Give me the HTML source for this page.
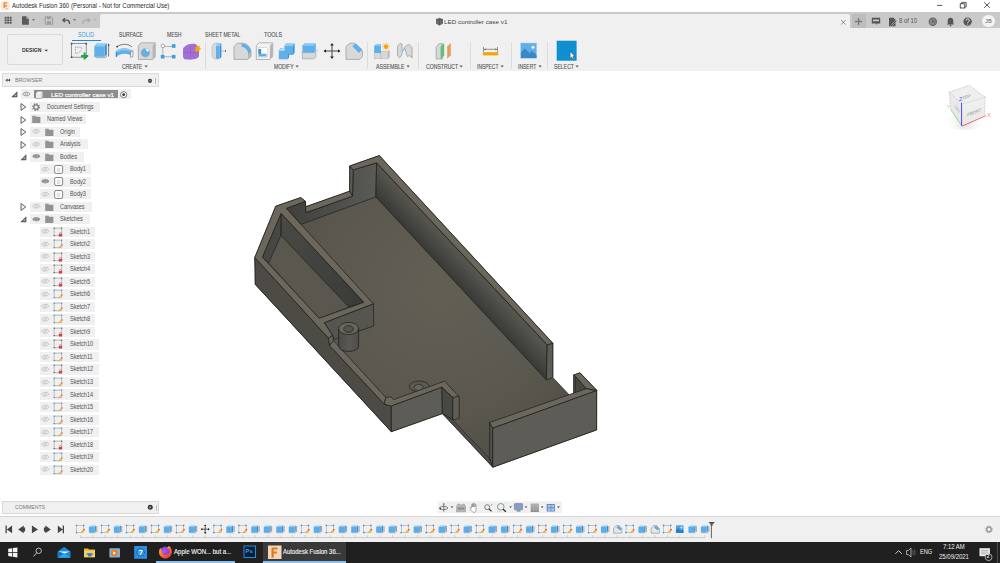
<!DOCTYPE html><html><head><meta charset="utf-8"><style>html,body{margin:0;padding:0;}body{width:1000px;height:563px;overflow:hidden;position:relative;background:#fff;font-family:'Liberation Sans',sans-serif;}div,svg{box-sizing:border-box;}</style></head><body>
<div style="position:absolute;left:0px;top:0px;width:1000px;height:12px;background:#ffffff;"></div>
<svg style="position:absolute;left:0px;top:0px;" width="11" height="12" viewBox="0 0 11 12"><rect x="1" y="1.6" width="8.6" height="8.6" fill="#fde6d2"/><path d="M3.6 2.2h3.6v1.3H4.9v1.6h2v1.3h-2v1.6H3.6z" fill="#e08a36"/><path d="M5.8 8.4h2.2v0.7H5.8z" fill="#f0a060"/></svg>
<div style="position:absolute;left:12.1px;top:2.94px;font-size:6.686px;line-height:1;color:#2a2a2a;font-weight:normal;white-space:nowrap;transform:scaleX(0.9126);transform-origin:0 0;">Autodesk Fusion 360 (Personal - Not for Commercial Use)</div>
<svg style="position:absolute;left:930px;top:0px;" width="70" height="12" viewBox="0 0 70 12"><path d="M7 5.4h5.3" stroke="#222" stroke-width="0.75"/><path d="M31.6 3.6v-1.2h4.6v4.6h-1.2" fill="none" stroke="#222" stroke-width="0.7"/><rect x="30.2" y="3.8" width="4.6" height="4.2" fill="none" stroke="#222" stroke-width="0.75"/><path d="M54.2 2.4l5.6 5.4M59.8 2.4l-5.6 5.4" stroke="#222" stroke-width="0.75"/></svg>
<div style="position:absolute;left:0px;top:12px;width:1000px;height:16px;background:#c9c9c9;"></div>
<div style="position:absolute;left:100px;top:13.5px;width:750px;height:14.5px;background:#f0f0f0;border-radius:2px 2px 0 0;"></div>
<svg style="position:absolute;left:4px;top:16px;" width="10" height="9" viewBox="0 0 10 9"><rect x="0.7" y="0.8" width="1.9" height="1.9" fill="#555"/><rect x="0.7" y="3.3" width="1.9" height="1.9" fill="#555"/><rect x="0.7" y="5.8" width="1.9" height="1.9" fill="#555"/><rect x="3.2" y="0.8" width="1.9" height="1.9" fill="#555"/><rect x="3.2" y="3.3" width="1.9" height="1.9" fill="#555"/><rect x="3.2" y="5.8" width="1.9" height="1.9" fill="#555"/><rect x="5.7" y="0.8" width="1.9" height="1.9" fill="#555"/><rect x="5.7" y="3.3" width="1.9" height="1.9" fill="#555"/><rect x="5.7" y="5.8" width="1.9" height="1.9" fill="#555"/></svg>
<svg style="position:absolute;left:21px;top:16px;" width="16" height="9" viewBox="0 0 16 9"><path d="M1 0.3h4.2l2.6 2.6v5.8H1z" fill="#5a5a5a"/><path d="M5.2 0.3v2.6h2.6" fill="#9a9a9a"/><path d="M11 3.2h3l-1.5 1.6z" fill="#555"/></svg>
<svg style="position:absolute;left:44px;top:16px;" width="10" height="9" viewBox="0 0 10 9"><path d="M1.2 0.8h6.2l1.2 1.2v6.2H1.2z" fill="none" stroke="#999" stroke-width="1"/><rect x="3" y="1" width="3.6" height="2.2" fill="#999"/><rect x="3" y="5.2" width="4" height="2.6" fill="#999"/></svg>
<svg style="position:absolute;left:62px;top:16px;" width="16" height="9" viewBox="0 0 16 9"><path d="M3 2.2L0.8 4.2L3 6.2M1 4.2h3.5c1.8 0 3 1.2 3 3v0.8" fill="none" stroke="#555" stroke-width="1.3"/><path d="M11 3.2h3l-1.5 1.6z" fill="#555"/></svg>
<svg style="position:absolute;left:82px;top:16px;" width="16" height="9" viewBox="0 0 16 9"><path d="M5.5 2.2L7.7 4.2L5.5 6.2M7.5 4.2H4c-1.8 0-3 1.2-3 3v0.8" fill="none" stroke="#aaa" stroke-width="1.3"/><path d="M11.5 3.2h3l-1.5 1.6z" fill="#aaa"/></svg>
<svg style="position:absolute;left:435px;top:16.5px;" width="9" height="9" viewBox="0 0 9 9"><path d="M1 2.2L4.5 0.8L8 2.2v4.6L4.5 8.4L1 6.8z" fill="#6a6a6a"/><path d="M1 2.2L4.5 3.4L8 2.2" fill="none" stroke="#444" stroke-width="0.6"/><path d="M4.5 3.4v5" stroke="#444" stroke-width="0.6"/></svg>
<div style="position:absolute;left:444.4px;top:18.53px;font-size:6.105px;line-height:1;color:#444;font-weight:normal;white-space:nowrap;transform:scaleX(1.0340);transform-origin:0 0;">LED controller case v1</div>
<svg style="position:absolute;left:840px;top:18.5px;" width="7" height="7" viewBox="0 0 7 7"><path d="M1 1l4.6 4.6M5.6 1L1 5.6" stroke="#777" stroke-width="0.8"/></svg>
<div style="position:absolute;left:851.5px;top:14px;width:14px;height:14px;background:#bdbdbd;"></div>
<svg style="position:absolute;left:854px;top:17px;" width="10" height="9" viewBox="0 0 10 9"><path d="M4.6 1v7M1.1 4.5h7" stroke="#777" stroke-width="1.3"/></svg>
<svg style="position:absolute;left:871px;top:16.5px;" width="10" height="9" viewBox="0 0 10 9"><path d="M0.8 0.8h8.4v5.6H6.5l-1.2 1.6v-1.6H0.8z" fill="#555"/><rect x="2" y="2.6" width="6" height="1.6" fill="#ccc"/></svg>
<svg style="position:absolute;left:888px;top:16.5px;" width="10" height="10" viewBox="0 0 10 10"><path d="M1 0.8h4.5l2 2v6.4H1z" fill="#555"/><path d="M3.5 7.5l4.5-4.5 1 1-4.5 4.5z" fill="#555" stroke="#c9c9c9" stroke-width="0.5"/></svg>
<div style="position:absolute;left:898.5px;top:18.19px;font-size:6.395px;line-height:1;color:#555;font-weight:normal;white-space:nowrap;transform:scaleX(0.9306);transform-origin:0 0;">8 of 10</div>
<svg style="position:absolute;left:928px;top:16.5px;" width="10" height="10" viewBox="0 0 10 10"><circle cx="4.8" cy="4.8" r="4.2" fill="#666"/><circle cx="4.8" cy="4.8" r="3" fill="#888"/><path d="M4.8 2.8v2.2h1.8" fill="none" stroke="#444" stroke-width="0.8"/></svg>
<svg style="position:absolute;left:946px;top:16.5px;" width="9" height="10" viewBox="0 0 9 10"><path d="M4.5 0.8c-2 0-2.8 1.6-2.8 3.4v2.2L0.8 7.6h7.4l-0.9-1.2V4.2c0-1.8-0.8-3.4-2.8-3.4z" fill="#555"/><circle cx="4.5" cy="8.4" r="0.9" fill="#555"/></svg>
<svg style="position:absolute;left:963px;top:16.5px;" width="10" height="10" viewBox="0 0 10 10"><circle cx="4.6" cy="4.6" r="4.2" fill="#555"/><path d="M3.1 3.5c0-1 0.7-1.6 1.6-1.6s1.6 0.6 1.6 1.5c0 1-1.5 1.2-1.5 2.3" fill="none" stroke="#fff" stroke-width="0.9"/><circle cx="4.7" cy="7" r="0.55" fill="#fff"/></svg>
<div style="position:absolute;left:982px;top:14.7px;width:12.5px;height:12.5px;border-radius:50%;background:#f3f3f3;"></div>
<div style="position:absolute;left:984.8px;top:18.23px;font-size:6.105px;line-height:1;color:#666;font-weight:normal;white-space:nowrap;transform:scaleX(0.9545);transform-origin:0 0;">JB</div>
<div style="position:absolute;left:0px;top:28px;width:1000px;height:43px;background:#f0f0f0;"></div>
<div style="position:absolute;left:6.5px;top:34.4px;width:56px;height:31px;border:0.8px solid #d9d9d9;border-radius:2px;background:#f0f0f0"></div>
<div style="position:absolute;left:22px;top:47.13px;font-size:6.105px;line-height:1;color:#333;font-weight:bold;white-space:nowrap;transform:scaleX(0.8289);transform-origin:0 0;">DESIGN</div>
<svg style="position:absolute;left:43.5px;top:48.6px;" width="5" height="4" viewBox="0 0 5 4"><path d="M0.5 0.8h3.5L2.25 2.6z" fill="#333"/></svg>
<div style="position:absolute;left:78px;top:31.96px;font-size:6.541px;line-height:1;color:#3b97d6;font-weight:normal;white-space:nowrap;transform:scaleX(0.8253);transform-origin:0 0;">SOLID</div>
<div style="position:absolute;left:72px;top:39.7px;width:28.5px;height:1.5px;background:#1c8ad6;"></div>
<div style="position:absolute;left:118.8px;top:31.96px;font-size:6.541px;line-height:1;color:#555;font-weight:normal;white-space:nowrap;transform:scaleX(0.7768);transform-origin:0 0;-webkit-text-stroke:0.12px #555;">SURFACE</div>
<div style="position:absolute;left:167px;top:31.96px;font-size:6.541px;line-height:1;color:#555;font-weight:normal;white-space:nowrap;transform:scaleX(0.7620);transform-origin:0 0;-webkit-text-stroke:0.12px #555;">MESH</div>
<div style="position:absolute;left:205.2px;top:31.96px;font-size:6.541px;line-height:1;color:#555;font-weight:normal;white-space:nowrap;transform:scaleX(0.7874);transform-origin:0 0;-webkit-text-stroke:0.12px #555;">SHEET METAL</div>
<div style="position:absolute;left:264.2px;top:31.96px;font-size:6.541px;line-height:1;color:#555;font-weight:normal;white-space:nowrap;transform:scaleX(0.8162);transform-origin:0 0;-webkit-text-stroke:0.12px #555;">TOOLS</div>
<div style="position:absolute;left:122.2px;top:63.76px;font-size:6.541px;line-height:1;color:#555;font-weight:normal;white-space:nowrap;transform:scaleX(0.7794);transform-origin:0 0;-webkit-text-stroke:0.12px #555;">CREATE</div>
<svg style="position:absolute;left:144.2px;top:64.9px;" width="5" height="4" viewBox="0 0 5 4"><path d="M0.5 0.6h3.2L2.1 2.4z" fill="#555"/></svg>
<div style="position:absolute;left:273.5px;top:63.76px;font-size:6.541px;line-height:1;color:#555;font-weight:normal;white-space:nowrap;transform:scaleX(0.7667);transform-origin:0 0;-webkit-text-stroke:0.12px #555;">MODIFY</div>
<svg style="position:absolute;left:295.2px;top:64.9px;" width="5" height="4" viewBox="0 0 5 4"><path d="M0.5 0.6h3.2L2.1 2.4z" fill="#555"/></svg>
<div style="position:absolute;left:376px;top:63.76px;font-size:6.541px;line-height:1;color:#555;font-weight:normal;white-space:nowrap;transform:scaleX(0.8082);transform-origin:0 0;-webkit-text-stroke:0.12px #555;">ASSEMBLE</div>
<svg style="position:absolute;left:405.8px;top:64.9px;" width="5" height="4" viewBox="0 0 5 4"><path d="M0.5 0.6h3.2L2.1 2.4z" fill="#555"/></svg>
<div style="position:absolute;left:425.5px;top:63.76px;font-size:6.541px;line-height:1;color:#555;font-weight:normal;white-space:nowrap;transform:scaleX(0.7842);transform-origin:0 0;-webkit-text-stroke:0.12px #555;">CONSTRUCT</div>
<svg style="position:absolute;left:458.8px;top:64.9px;" width="5" height="4" viewBox="0 0 5 4"><path d="M0.5 0.6h3.2L2.1 2.4z" fill="#555"/></svg>
<div style="position:absolute;left:477.2px;top:63.76px;font-size:6.541px;line-height:1;color:#555;font-weight:normal;white-space:nowrap;transform:scaleX(0.7584);transform-origin:0 0;-webkit-text-stroke:0.12px #555;">INSPECT</div>
<svg style="position:absolute;left:499.8px;top:64.9px;" width="5" height="4" viewBox="0 0 5 4"><path d="M0.5 0.6h3.2L2.1 2.4z" fill="#555"/></svg>
<div style="position:absolute;left:518.2px;top:63.76px;font-size:6.541px;line-height:1;color:#555;font-weight:normal;white-space:nowrap;transform:scaleX(0.7667);transform-origin:0 0;-webkit-text-stroke:0.12px #555;">INSERT</div>
<svg style="position:absolute;left:537.6px;top:64.9px;" width="5" height="4" viewBox="0 0 5 4"><path d="M0.5 0.6h3.2L2.1 2.4z" fill="#555"/></svg>
<div style="position:absolute;left:554px;top:63.76px;font-size:6.541px;line-height:1;color:#555;font-weight:normal;white-space:nowrap;transform:scaleX(0.7860);transform-origin:0 0;-webkit-text-stroke:0.12px #555;">SELECT</div>
<svg style="position:absolute;left:574.7px;top:64.9px;" width="5" height="4" viewBox="0 0 5 4"><path d="M0.5 0.6h3.2L2.1 2.4z" fill="#555"/></svg>
<div style="position:absolute;left:205.3px;top:42px;width:0.8px;height:26.5px;background:#dcdcdc;"></div>
<div style="position:absolute;left:367.4px;top:42px;width:0.8px;height:26.5px;background:#dcdcdc;"></div>
<div style="position:absolute;left:418.3px;top:42px;width:0.8px;height:26.5px;background:#dcdcdc;"></div>
<div style="position:absolute;left:469.5px;top:42px;width:0.8px;height:26.5px;background:#dcdcdc;"></div>
<div style="position:absolute;left:511px;top:42px;width:0.8px;height:26.5px;background:#dcdcdc;"></div>
<div style="position:absolute;left:546.7px;top:42px;width:0.8px;height:26.5px;background:#dcdcdc;"></div>
<svg style="position:absolute;left:0;top:28px" width="1000" height="43" viewBox="0 28 1000 43"><rect x="71.6" y="43.6" width="14.6" height="13.6" fill="none" stroke="#6a6a6a" stroke-width="0.7"/><rect x="70.8" y="42.800000000000004" width="1.6" height="1.6" fill="#444"/><rect x="85.4" y="42.800000000000004" width="1.6" height="1.6" fill="#444"/><rect x="70.8" y="56.400000000000006" width="1.6" height="1.6" fill="#444"/><rect x="85.4" y="56.400000000000006" width="1.6" height="1.6" fill="#444"/><path d="M75.5 47.2v6.3M75.5 47.2h6.4M75.5 53.5c3.5 0 6.4-2.6 6.4-6.3" fill="none" stroke="#777" stroke-width="0.6" stroke-dasharray="1 0.6"/><path d="M84.6 52.4v7.2M81 56h7.2" stroke="#22a64a" stroke-width="2"/><path d="M94.3 56.5l2 1.8h9l2-2v-1.5l-2 2h-9l-2-1.8z" fill="#b5b5b5"/><path d="M94.3 46.2l2.2-3h10.3l-2.2 3z" fill="#8ccbf5"/><path d="M104.6 46.2l2.2-3v11.2l-2.2 2.4z" fill="#3f8fd0"/><rect x="94.3" y="46.2" width="10.3" height="10.6" fill="#5fb0ea"/><path d="M108.6 44v12.6" stroke="#333" stroke-width="0.6"/><path d="M107.6 45.4l1-1.8 1 1.8z" fill="#333"/><path d="M116.8 46.8c4.5-3.2 11.2-3.4 15.2 0.2" fill="none" stroke="#444" stroke-width="0.7"/><circle cx="117.2" cy="46.6" r="0.9" fill="#333"/><path d="M115.8 51c5.2-3.6 12-3.6 17 0v5.2c-5-3.4-11.8-3.4-17 0.8z" fill="#5fb0ea"/><path d="M115.8 51c5.2-3.6 12-3.6 17 0l-1.6 1.2c-4.6-2.6-10.4-2.6-14.2 0.4z" fill="#8ccbf5"/><path d="M130.6 51.6l2.4-0.8v5.6l-2.4 1z" fill="#f4f4f4" stroke="#555" stroke-width="0.5"/><path d="M115.8 52.2v4.6c0.6 0.4 1 0.3 1.4 0v-4.8z" fill="#3f8fd0"/><path d="M138.3 46l2.6-3.2h14.3v13.7l-2.6 3H138.3z" fill="#d8d8d8" stroke="#8c8c8c" stroke-width="0.6"/><path d="M152.6 45.9l2.6-3.1v13.7l-2.6 3z" fill="#b5b5b5"/><circle cx="145.4" cy="52.8" r="4.3" fill="#5fb0ea" stroke="#aaa" stroke-width="0.6"/><path d="M145.4 48.5a4.3 4.3 0 0 1 3.6 2.2l-1.8 1z" fill="#fff"/><path d="M162.8 46.4h10M162.8 46.4v10.3h10" stroke="#888" stroke-width="0.6" fill="none"/><circle cx="162.8" cy="45.8" r="1.8" fill="#fff" stroke="#777" stroke-width="0.6"/><rect x="171.9" y="44.2" width="3.6" height="3.6" fill="#3d9be0"/><rect x="160.8" y="54.9" width="3.6" height="3.6" fill="#3d9be0"/><rect x="171.9" y="54.9" width="3.6" height="3.6" fill="#3d9be0"/><path d="M185.5 46c2-2 7-2.5 10-2l3.5 3.5v9c-1 2-4 3-8 3h-5c-2 0-3-1.5-3-3.5v-6.5c0-1.5 1-2.5 2.5-3.5z" fill="#a070d8"/><path d="M183.5 52.5h15M190.5 46v13.5" stroke="#8658c0" stroke-width="0.5"/><path d="M195.7 47.6l1.2-3.2 1.1 2 2.2-0.8-0.8 2.2 2 1.1-2.3 0.9 0.6 2.2-2-1-1.2 2-0.5-2.2-2.2 0.2 1.4-1.6z" fill="#f6a20c"/><path d="M212 46l2.5-3h3.5v16h-3.5l-2.5-2.5z" fill="#d8d8d8" stroke="#b5b5b5" stroke-width="0.6"/><path d="M215.8 46.2l1.6-3.2h4l-1.6 3.2z" fill="#8ccbf5"/><path d="M219.8 46.2l1.6-3.2v13.5l-1.6 2.6z" fill="#3f8fd0"/><rect x="216" y="46.2" width="3.8" height="12.6" fill="#5fb0ea"/><path d="M222 51h3.2" stroke="#777" stroke-width="0.5"/><path d="M225 50.1l1.2 0.9-1.2 0.9z" fill="#333"/><path d="M234 46.4l3.2-3.2h5c4.6 0 8.8 3.6 8.8 8.6v4.6l-3 3H234z" fill="#d8d8d8" stroke="#8c8c8c" stroke-width="0.6"/><path d="M248 53.4l3-2.4v5.4l-3 3z" fill="#b5b5b5"/><path d="M241.6 43.4c4.8 0 9.2 3.6 9.4 8.8l-2.8 1.6c-0.4-3.8-3.2-6.8-6.6-7z" fill="#5fb0ea"/><path d="M256.3 45.8l2.8-3h13.6v13.5l-2.8 3.2H256.3z" fill="#f2f2f2" stroke="#8c8c8c" stroke-width="0.6"/><path d="M269.9 45.8l2.8-3v13.5l-2.8 3.2z" fill="#b5b5b5"/><rect x="258.2" y="47.8" width="9.5" height="9.2" fill="#fff" stroke="#b5b5b5" stroke-width="0.4"/><path d="M258.6 49h2.5v4.8h5.4v2.8h-7.9z" fill="#5fb0ea"/><path d="M258.6 49h2.5v4.8h-2.5z" fill="#3f8fd0"/><path d="M284.4 45.6l1.6-2.4h8.6l-1.6 2.4z" fill="#8ccbf5"/><path d="M293 45.6l1.6-2.4v9.4L293 55z" fill="#3f8fd0"/><rect x="284.4" y="45.6" width="8.6" height="9.4" fill="#5fb0ea"/><path d="M278.8 50.5l1.6-2.4h4.6v0z" fill="#8ccbf5"/><rect x="278.8" y="50.5" width="8.6" height="8.8" fill="#5fb0ea"/><path d="M287.4 55l1.6-1.6v4.4l-1.6 1.6z" fill="#3f8fd0"/><path d="M302.4 54l2-1.8h11.4v5l-2 1.6H302.4z" fill="#d8d8d8" stroke="#8c8c8c" stroke-width="0.5"/><path d="M302.4 45.8l2-2.4h11.4v7.2l-2 1.5H302.4z" fill="#5fb0ea"/><path d="M302.4 45.8l2-2.4h11.4l-2 2.4z" fill="#8ccbf5"/><path d="M301.2 52.6h12.4l4-2.4" fill="none" stroke="#57aee8" stroke-width="0.7"/><path d="M332 44v14M324.6 51h14.8" stroke="#333" stroke-width="0.9"/><path d="M332 43l-1.8 2.4h3.6zM332 59l-1.8-2.4h3.6zM323.6 51l2.4-1.8v3.6zM340.4 51l-2.4-1.8v3.6z" fill="#222"/><path d="M346 46.6l4-3.4h4.6l7.8 7.4v6.2l-2.6 2.6H346z" fill="#d8d8d8" stroke="#8c8c8c" stroke-width="0.6"/><path d="M352.4 46.2l3-3 6.8 6.4-3.2 3.4z" fill="#5fb0ea"/><rect x="374.2" y="51.4" width="6.8" height="7.4" fill="#d8d8d8" stroke="#b5b5b5" stroke-width="0.5"/><rect x="381" y="51.4" width="7" height="7.4" fill="#d8d8d8" stroke="#b5b5b5" stroke-width="0.5"/><path d="M388 51.4l1.6-1.6v7.4L388 58.8z" fill="#b5b5b5"/><path d="M374.2 45.5l1.6-1.6h5.8l-0.6 1.6z" fill="#8ccbf5"/><rect x="374.2" y="45.5" width="6.8" height="7.5" fill="#5fb0ea"/><circle cx="386" cy="46.6" r="2.2" fill="#f6a20c"/><path d="M386 42.6v8M382 46.6h8M383.2 43.8l5.6 5.6M388.8 43.8l-5.6 5.6" stroke="#f6a20c" stroke-width="0.6"/><path d="M397.5 46.5l2.4-3.2 2.2 1v9.6l-2.4 4-2.2-2z" fill="#d8d8d8" stroke="#8c8c8c" stroke-width="0.6"/><path d="M404.5 47.6l2.4-2.2 2.2-0.8 3 2.8v10.6l-2.6-2.4-2.2 1z" fill="#d8d8d8" stroke="#8c8c8c" stroke-width="0.6"/><path d="M402.5 51.5l2.2-3.6" stroke="#5fb0ea" stroke-width="1"/><path d="M436.2 47l3-3.4h3.2v15.4h-6.2z" fill="#d8d8d8" stroke="#8c8c8c" stroke-width="0.6"/><path d="M440.6 46.4l3.6-3.2v12.6l-3.6 3.2z" fill="#5cc27a"/><path d="M447.2 46.4l3.6-3.4v12.4l-3.6 3.2z" fill="#e89a63"/><path d="M483.5 47v5M497.5 47v5M484 49.3h13" stroke="#555" stroke-width="0.6"/><path d="M484.2 49.3l1.4-0.8v1.6zM496.8 49.3l-1.4-0.8v1.6z" fill="#333"/><rect x="483" y="52.2" width="15.2" height="3.2" fill="#f4a40a"/><rect x="520.7" y="43" width="16" height="15.3" fill="#5fb0ea" stroke="#a5d4f4" stroke-width="0.5"/><path d="M520.9 58.1v-5.4l3.8-4.4 4.6 4.6 2.6-2.2 4.6 4.4v3z" fill="#3a88c6"/><circle cx="533" cy="47.3" r="1.5" fill="#fff7c4"/><rect x="556.7" y="40.7" width="19.9" height="20" fill="#0e8fd4"/><rect x="559.2" y="43.4" width="14.4" height="13.5" fill="none" stroke="#2fb06a" stroke-width="0.5" stroke-dasharray="1 0.8"/><path d="M570.2 51.4v7l1.5-1.4 1.2 2.6 1-0.5-1.2-2.5h2z" fill="#fff" stroke="#333" stroke-width="0.4"/></svg>
<div style="position:absolute;left:2px;top:73.3px;width:157px;height:13.4px;background:#f0f0f0;border:0.7px solid #dadada;"></div>
<svg style="position:absolute;left:4.5px;top:77.5px;" width="6" height="5" viewBox="0 0 6 5"><path d="M0.3 2.2L2.6 0.6v3.2zM2.8 2.2L5.1 0.6v3.2z" fill="#444"/></svg>
<div style="position:absolute;left:15px;top:76.61px;font-size:6.250px;line-height:1;color:#777;font-weight:normal;white-space:nowrap;transform:scaleX(0.8423);transform-origin:0 0;">BROWSER</div>
<svg style="position:absolute;left:146.5px;top:78px;" width="6" height="6" viewBox="0 0 6 6"><circle cx="3" cy="2.8" r="2.1" fill="#333"/><path d="M1.6 2.8h2.8" stroke="#fff" stroke-width="0.5"/></svg>
<div style="position:absolute;left:155.2px;top:77.5px;width:1px;height:6px;background:#bbb;"></div>
<div style="position:absolute;left:20.9px;top:89.0px;width:110.0px;height:10.2px;background:#f0f0f0;"></div>
<svg style="position:absolute;left:10.6px;top:90.9px;" width="7" height="7" viewBox="0 0 7 7"><path d="M0.2 6.3L6.4 0.3V6.3z" fill="#505050"/><path d="M2.6 5.3L5.4 2.6v2.7z" fill="#a8a8a8"/></svg>
<svg style="position:absolute;left:22.2px;top:91.0px;" width="9" height="7" viewBox="0 0 9 7"><path d="M0.5 3C2.1 0.6 6.5 0.6 8.1 3C6.5 5.4 2.1 5.4 0.5 3z" fill="none" stroke="#8f8f8f" stroke-width="0.9"/><circle cx="4.3" cy="3" r="1.3" fill="none" stroke="#a0a0a0" stroke-width="0.6"/><circle cx="4.3" cy="3" r="0.4" fill="#777"/></svg>
<div style="position:absolute;left:34px;top:90.1px;width:84px;height:8.4px;background:#8d8d8d;"></div>
<svg style="position:absolute;left:35.2px;top:90.6px;" width="9" height="8.5" viewBox="0 0 9 8.5"><path d="M0.6 2.2l1.8-1.8h5.4v5.6l-1.8 1.9H0.6z" fill="#7b7b7b"/><path d="M1 2.4l1.6-1.6h4.8v5.2l-1.6 1.6H1z" fill="#e9ebf0"/><path d="M1 2.4l1.6-1.6h4.8l-1.6 1.6z" fill="#fbfbfd"/><path d="M5.8 2.4l1.6-1.6v5.2l-1.6 1.6z" fill="#d3d6de"/></svg>
<div style="position:absolute;left:51px;top:91.91px;font-size:6.250px;line-height:1;color:#ffffff;font-weight:normal;white-space:nowrap;transform:scaleX(1.0020);transform-origin:0 0;-webkit-text-stroke:0.2px #fff;">LED controller case v1</div>
<svg style="position:absolute;left:119.8px;top:90.8px;" width="8" height="8" viewBox="0 0 8 8"><circle cx="3.7" cy="3.7" r="3.1" fill="#fff" stroke="#444" stroke-width="0.7"/><circle cx="3.7" cy="3.7" r="1.4" fill="#333"/></svg>
<div style="position:absolute;left:30px;top:101.52px;width:69.9px;height:10.2px;background:#f0f0f0;"></div>
<svg style="position:absolute;left:20.3px;top:103.02px;" width="8" height="8" viewBox="0 0 8 8"><path d="M1 0.6L5.8 4L1 7.4z" fill="#f4f4f4" stroke="#606060" stroke-width="1" stroke-linejoin="round"/></svg>
<svg style="position:absolute;left:31.8px;top:102.52px;" width="9" height="9" viewBox="0 0 9 9"><circle cx="4.05" cy="4.05" r="3.3" fill="none" stroke="#8a8a8a" stroke-width="1.5" stroke-dasharray="1.3 1.29"/><circle cx="4.05" cy="4.05" r="2.3" fill="none" stroke="#8a8a8a" stroke-width="1.6"/></svg>
<div style="position:absolute;left:47.3px;top:103.56px;font-size:6.686px;line-height:1;color:#525252;font-weight:normal;white-space:nowrap;transform:scaleX(0.8249);transform-origin:0 0;">Document Settings</div>
<div style="position:absolute;left:30px;top:114.03999999999999px;width:56px;height:10.2px;background:#f0f0f0;"></div>
<svg style="position:absolute;left:20.3px;top:115.53999999999999px;" width="8" height="8" viewBox="0 0 8 8"><path d="M1 0.6L5.8 4L1 7.4z" fill="#f4f4f4" stroke="#606060" stroke-width="1" stroke-linejoin="round"/></svg>
<svg style="position:absolute;left:32px;top:115.13999999999999px;" width="9" height="8" viewBox="0 0 9 8"><path d="M0.2 0.8h3.2l0.8 0.9h4.2v6.2H0.2z" fill="#939393"/><path d="M0.2 1.9h3.2l0.8-0.5" stroke="#aaa" stroke-width="0.4" fill="none"/></svg>
<div style="position:absolute;left:47.3px;top:116.08px;font-size:6.686px;line-height:1;color:#525252;font-weight:normal;white-space:nowrap;transform:scaleX(0.8632);transform-origin:0 0;">Named Views</div>
<div style="position:absolute;left:30px;top:126.56px;width:49.599999999999994px;height:10.2px;background:#f0f0f0;"></div>
<svg style="position:absolute;left:20.3px;top:128.06px;" width="8" height="8" viewBox="0 0 8 8"><path d="M1 0.6L5.8 4L1 7.4z" fill="#f4f4f4" stroke="#606060" stroke-width="1" stroke-linejoin="round"/></svg>
<svg style="position:absolute;left:31.8px;top:128.16px;" width="9" height="7" viewBox="0 0 9 7"><path d="M0.6 3.2C2.2 0.8 6.4 0.8 8 3.2C6.4 5.6 2.2 5.6 0.6 3.2z" fill="none" stroke="#c2c2c2" stroke-width="0.9"/><circle cx="4.3" cy="3.2" r="1.1" fill="none" stroke="#c2c2c2" stroke-width="0.6"/><path d="M2.2 5.9L6.4 0.5" stroke="#c2c2c2" stroke-width="0.5"/></svg>
<svg style="position:absolute;left:45px;top:127.66px;" width="9" height="8" viewBox="0 0 9 8"><path d="M0.2 0.8h3.2l0.8 0.9h4.2v6.2H0.2z" fill="#939393"/><path d="M0.2 1.9h3.2l0.8-0.5" stroke="#aaa" stroke-width="0.4" fill="none"/></svg>
<div style="position:absolute;left:60.4px;top:128.60px;font-size:6.686px;line-height:1;color:#525252;font-weight:normal;white-space:nowrap;transform:scaleX(0.8300);transform-origin:0 0;">Origin</div>
<div style="position:absolute;left:30px;top:139.08px;width:58.2px;height:10.2px;background:#f0f0f0;"></div>
<svg style="position:absolute;left:20.3px;top:140.58px;" width="8" height="8" viewBox="0 0 8 8"><path d="M1 0.6L5.8 4L1 7.4z" fill="#f4f4f4" stroke="#606060" stroke-width="1" stroke-linejoin="round"/></svg>
<svg style="position:absolute;left:31.8px;top:140.68px;" width="9" height="7" viewBox="0 0 9 7"><path d="M0.6 3.2C2.2 0.8 6.4 0.8 8 3.2C6.4 5.6 2.2 5.6 0.6 3.2z" fill="none" stroke="#c2c2c2" stroke-width="0.9"/><circle cx="4.3" cy="3.2" r="1.1" fill="none" stroke="#c2c2c2" stroke-width="0.6"/><path d="M2.2 5.9L6.4 0.5" stroke="#c2c2c2" stroke-width="0.5"/></svg>
<svg style="position:absolute;left:45px;top:140.18px;" width="9" height="8" viewBox="0 0 9 8"><path d="M0.2 0.8h3.2l0.8 0.9h4.2v6.2H0.2z" fill="#939393"/><path d="M0.2 1.9h3.2l0.8-0.5" stroke="#aaa" stroke-width="0.4" fill="none"/></svg>
<div style="position:absolute;left:60.4px;top:141.12px;font-size:6.686px;line-height:1;color:#525252;font-weight:normal;white-space:nowrap;transform:scaleX(0.8300);transform-origin:0 0;">Analysis</div>
<div style="position:absolute;left:30px;top:151.6px;width:54px;height:10.2px;background:#f0f0f0;"></div>
<svg style="position:absolute;left:19.8px;top:153.5px;" width="7" height="7" viewBox="0 0 7 7"><path d="M0.4 6.2L6.4 0.3V6.2z" fill="#505050"/><path d="M2.6 5.2L5.4 2.5v2.7z" fill="#a8a8a8"/></svg>
<svg style="position:absolute;left:31.8px;top:153.2px;" width="9" height="7" viewBox="0 0 9 7"><path d="M0.3 3.2C2 0.4 6.6 0.4 8.3 3.2C6.6 6 2 6 0.3 3.2z" fill="#8c8c8c"/><circle cx="4.3" cy="3.2" r="1.6" fill="none" stroke="#b4b4b4" stroke-width="0.7"/></svg>
<svg style="position:absolute;left:45px;top:152.7px;" width="9" height="8" viewBox="0 0 9 8"><path d="M0.2 0.8h3.2l0.8 0.9h4.2v6.2H0.2z" fill="#939393"/><path d="M0.2 1.9h3.2l0.8-0.5" stroke="#aaa" stroke-width="0.4" fill="none"/></svg>
<div style="position:absolute;left:60.4px;top:153.64px;font-size:6.686px;line-height:1;color:#525252;font-weight:normal;white-space:nowrap;transform:scaleX(0.8300);transform-origin:0 0;">Bodies</div>
<div style="position:absolute;left:30px;top:201.67999999999998px;width:62px;height:10.2px;background:#f0f0f0;"></div>
<svg style="position:absolute;left:20.3px;top:203.17999999999998px;" width="8" height="8" viewBox="0 0 8 8"><path d="M1 0.6L5.8 4L1 7.4z" fill="#f4f4f4" stroke="#606060" stroke-width="1" stroke-linejoin="round"/></svg>
<svg style="position:absolute;left:31.8px;top:203.27999999999997px;" width="9" height="7" viewBox="0 0 9 7"><path d="M0.6 3.2C2.2 0.8 6.4 0.8 8 3.2C6.4 5.6 2.2 5.6 0.6 3.2z" fill="none" stroke="#c2c2c2" stroke-width="0.9"/><circle cx="4.3" cy="3.2" r="1.1" fill="none" stroke="#c2c2c2" stroke-width="0.6"/><path d="M2.2 5.9L6.4 0.5" stroke="#c2c2c2" stroke-width="0.5"/></svg>
<svg style="position:absolute;left:45px;top:202.77999999999997px;" width="9" height="8" viewBox="0 0 9 8"><path d="M0.2 0.8h3.2l0.8 0.9h4.2v6.2H0.2z" fill="#939393"/><path d="M0.2 1.9h3.2l0.8-0.5" stroke="#aaa" stroke-width="0.4" fill="none"/></svg>
<div style="position:absolute;left:60.4px;top:203.72px;font-size:6.686px;line-height:1;color:#525252;font-weight:normal;white-space:nowrap;transform:scaleX(0.8300);transform-origin:0 0;">Canvases</div>
<div style="position:absolute;left:30px;top:214.2px;width:60px;height:10.2px;background:#f0f0f0;"></div>
<svg style="position:absolute;left:19.8px;top:216.1px;" width="7" height="7" viewBox="0 0 7 7"><path d="M0.4 6.2L6.4 0.3V6.2z" fill="#505050"/><path d="M2.6 5.2L5.4 2.5v2.7z" fill="#a8a8a8"/></svg>
<svg style="position:absolute;left:31.8px;top:215.79999999999998px;" width="9" height="7" viewBox="0 0 9 7"><path d="M0.3 3.2C2 0.4 6.6 0.4 8.3 3.2C6.6 6 2 6 0.3 3.2z" fill="#8c8c8c"/><circle cx="4.3" cy="3.2" r="1.6" fill="none" stroke="#b4b4b4" stroke-width="0.7"/></svg>
<svg style="position:absolute;left:45px;top:215.29999999999998px;" width="9" height="8" viewBox="0 0 9 8"><path d="M0.2 0.8h3.2l0.8 0.9h4.2v6.2H0.2z" fill="#939393"/><path d="M0.2 1.9h3.2l0.8-0.5" stroke="#aaa" stroke-width="0.4" fill="none"/></svg>
<div style="position:absolute;left:60.4px;top:216.24px;font-size:6.686px;line-height:1;color:#525252;font-weight:normal;white-space:nowrap;transform:scaleX(0.8300);transform-origin:0 0;">Sketches</div>
<div style="position:absolute;left:39.5px;top:164.12px;width:51.5px;height:10.2px;background:#f0f0f0;"></div>
<svg style="position:absolute;left:41px;top:165.72px;" width="9" height="7" viewBox="0 0 9 7"><path d="M0.6 3.2C2.2 0.8 6.4 0.8 8 3.2C6.4 5.6 2.2 5.6 0.6 3.2z" fill="none" stroke="#c2c2c2" stroke-width="0.9"/><circle cx="4.3" cy="3.2" r="1.1" fill="none" stroke="#c2c2c2" stroke-width="0.6"/><path d="M2.2 5.9L6.4 0.5" stroke="#c2c2c2" stroke-width="0.5"/></svg>
<svg style="position:absolute;left:53.8px;top:164.92px;" width="10" height="9" viewBox="0 0 10 9"><rect x="0.6" y="0.5" width="8" height="8" rx="1.6" fill="#fff" stroke="#6a6a6a" stroke-width="0.8"/><rect x="2.8" y="2.8" width="3.6" height="4.4" fill="#e2e2e2"/></svg>
<div style="position:absolute;left:69.6px;top:166.16px;font-size:6.686px;line-height:1;color:#525252;font-weight:normal;white-space:nowrap;transform:scaleX(0.8439);transform-origin:0 0;">Body1</div>
<div style="position:absolute;left:39.5px;top:176.64000000000001px;width:51.5px;height:10.2px;background:#f0f0f0;"></div>
<svg style="position:absolute;left:41px;top:178.24px;" width="9" height="7" viewBox="0 0 9 7"><path d="M0.3 3.2C2 0.4 6.6 0.4 8.3 3.2C6.6 6 2 6 0.3 3.2z" fill="#8c8c8c"/><circle cx="4.3" cy="3.2" r="1.6" fill="none" stroke="#b4b4b4" stroke-width="0.7"/></svg>
<svg style="position:absolute;left:53.8px;top:177.44px;" width="10" height="9" viewBox="0 0 10 9"><rect x="0.6" y="0.5" width="8" height="8" rx="1.6" fill="#fff" stroke="#6a6a6a" stroke-width="0.8"/><rect x="2.8" y="2.8" width="3.6" height="4.4" fill="#e2e2e2"/></svg>
<div style="position:absolute;left:69.6px;top:178.68px;font-size:6.686px;line-height:1;color:#525252;font-weight:normal;white-space:nowrap;transform:scaleX(0.8439);transform-origin:0 0;">Body2</div>
<div style="position:absolute;left:39.5px;top:189.16px;width:51.5px;height:10.2px;background:#f0f0f0;"></div>
<svg style="position:absolute;left:41px;top:190.76px;" width="9" height="7" viewBox="0 0 9 7"><path d="M0.6 3.2C2.2 0.8 6.4 0.8 8 3.2C6.4 5.6 2.2 5.6 0.6 3.2z" fill="none" stroke="#c2c2c2" stroke-width="0.9"/><circle cx="4.3" cy="3.2" r="1.1" fill="none" stroke="#c2c2c2" stroke-width="0.6"/><path d="M2.2 5.9L6.4 0.5" stroke="#c2c2c2" stroke-width="0.5"/></svg>
<svg style="position:absolute;left:53.8px;top:189.95999999999998px;" width="10" height="9" viewBox="0 0 10 9"><rect x="0.6" y="0.5" width="8" height="8" rx="1.6" fill="#fff" stroke="#6a6a6a" stroke-width="0.8"/><rect x="2.8" y="2.8" width="3.6" height="4.4" fill="#e2e2e2"/></svg>
<div style="position:absolute;left:69.6px;top:191.20px;font-size:6.686px;line-height:1;color:#525252;font-weight:normal;white-space:nowrap;transform:scaleX(0.8439);transform-origin:0 0;">Body3</div>
<div style="position:absolute;left:39.5px;top:226.72px;width:55.7px;height:10.2px;background:#f0f0f0;"></div>
<svg style="position:absolute;left:41px;top:228.32px;" width="9" height="7" viewBox="0 0 9 7"><path d="M0.6 3.2C2.2 0.8 6.4 0.8 8 3.2C6.4 5.6 2.2 5.6 0.6 3.2z" fill="none" stroke="#c2c2c2" stroke-width="0.9"/><circle cx="4.3" cy="3.2" r="1.1" fill="none" stroke="#c2c2c2" stroke-width="0.6"/><path d="M2.2 5.9L6.4 0.5" stroke="#c2c2c2" stroke-width="0.5"/></svg>
<svg style="position:absolute;left:53.4px;top:226.72px;" width="10" height="10" viewBox="0 0 10 10"><path d="M1.2 1.2h7.4v7.4H1.2z" fill="none" stroke="#9a9a9a" stroke-width="0.6"/><rect x="0.6" y="0.6" width="1.2" height="1.2" fill="#555"/><rect x="8.0" y="0.6" width="1.2" height="1.2" fill="#555"/><rect x="0.6" y="8.0" width="1.2" height="1.2" fill="#555"/><path d="M6.5 7.2v-0.7a1 1 0 0 1 2 0v0.7" fill="none" stroke="#d03a3a" stroke-width="0.55"/><rect x="5.9" y="7" width="3.2" height="2.6" rx="0.4" fill="#d8393a"/></svg>
<div style="position:absolute;left:69.6px;top:228.76px;font-size:6.686px;line-height:1;color:#525252;font-weight:normal;white-space:nowrap;transform:scaleX(0.8300);transform-origin:0 0;">Sketch1</div>
<div style="position:absolute;left:39.5px;top:239.24px;width:55.7px;height:10.2px;background:#f0f0f0;"></div>
<svg style="position:absolute;left:41px;top:240.84px;" width="9" height="7" viewBox="0 0 9 7"><path d="M0.6 3.2C2.2 0.8 6.4 0.8 8 3.2C6.4 5.6 2.2 5.6 0.6 3.2z" fill="none" stroke="#c2c2c2" stroke-width="0.9"/><circle cx="4.3" cy="3.2" r="1.1" fill="none" stroke="#c2c2c2" stroke-width="0.6"/><path d="M2.2 5.9L6.4 0.5" stroke="#c2c2c2" stroke-width="0.5"/></svg>
<svg style="position:absolute;left:53.4px;top:239.24px;" width="10" height="10" viewBox="0 0 10 10"><path d="M1.2 1.2h7.4v7.4H1.2z" fill="none" stroke="#9a9a9a" stroke-width="0.6"/><rect x="0.6" y="0.6" width="1.2" height="1.2" fill="#2d8fe0"/><rect x="8.0" y="0.6" width="1.2" height="1.2" fill="#2d8fe0"/><rect x="0.6" y="8.0" width="1.2" height="1.2" fill="#2d8fe0"/><path d="M5.4 9.4l0.3-1.2 2.8-2.8 0.9 0.9-2.8 2.8z" fill="#f3b21a"/><circle cx="9" cy="5.9" r="0.7" fill="#e5484d"/></svg>
<div style="position:absolute;left:69.6px;top:241.28px;font-size:6.686px;line-height:1;color:#525252;font-weight:normal;white-space:nowrap;transform:scaleX(0.8300);transform-origin:0 0;">Sketch2</div>
<div style="position:absolute;left:39.5px;top:251.76000000000002px;width:55.7px;height:10.2px;background:#f0f0f0;"></div>
<svg style="position:absolute;left:41px;top:253.36px;" width="9" height="7" viewBox="0 0 9 7"><path d="M0.6 3.2C2.2 0.8 6.4 0.8 8 3.2C6.4 5.6 2.2 5.6 0.6 3.2z" fill="none" stroke="#c2c2c2" stroke-width="0.9"/><circle cx="4.3" cy="3.2" r="1.1" fill="none" stroke="#c2c2c2" stroke-width="0.6"/><path d="M2.2 5.9L6.4 0.5" stroke="#c2c2c2" stroke-width="0.5"/></svg>
<svg style="position:absolute;left:53.4px;top:251.76000000000002px;" width="10" height="10" viewBox="0 0 10 10"><path d="M1.2 1.2h7.4v7.4H1.2z" fill="none" stroke="#9a9a9a" stroke-width="0.6"/><rect x="0.6" y="0.6" width="1.2" height="1.2" fill="#555"/><rect x="8.0" y="0.6" width="1.2" height="1.2" fill="#555"/><rect x="0.6" y="8.0" width="1.2" height="1.2" fill="#555"/><path d="M6.5 7.2v-0.7a1 1 0 0 1 2 0v0.7" fill="none" stroke="#d03a3a" stroke-width="0.55"/><rect x="5.9" y="7" width="3.2" height="2.6" rx="0.4" fill="#d8393a"/></svg>
<div style="position:absolute;left:69.6px;top:253.80px;font-size:6.686px;line-height:1;color:#525252;font-weight:normal;white-space:nowrap;transform:scaleX(0.8300);transform-origin:0 0;">Sketch3</div>
<div style="position:absolute;left:39.5px;top:264.28px;width:55.7px;height:10.2px;background:#f0f0f0;"></div>
<svg style="position:absolute;left:41px;top:265.88px;" width="9" height="7" viewBox="0 0 9 7"><path d="M0.6 3.2C2.2 0.8 6.4 0.8 8 3.2C6.4 5.6 2.2 5.6 0.6 3.2z" fill="none" stroke="#c2c2c2" stroke-width="0.9"/><circle cx="4.3" cy="3.2" r="1.1" fill="none" stroke="#c2c2c2" stroke-width="0.6"/><path d="M2.2 5.9L6.4 0.5" stroke="#c2c2c2" stroke-width="0.5"/></svg>
<svg style="position:absolute;left:53.4px;top:264.28px;" width="10" height="10" viewBox="0 0 10 10"><path d="M1.2 1.2h7.4v7.4H1.2z" fill="none" stroke="#9a9a9a" stroke-width="0.6"/><rect x="0.6" y="0.6" width="1.2" height="1.2" fill="#555"/><rect x="8.0" y="0.6" width="1.2" height="1.2" fill="#555"/><rect x="0.6" y="8.0" width="1.2" height="1.2" fill="#555"/><path d="M6.5 7.2v-0.7a1 1 0 0 1 2 0v0.7" fill="none" stroke="#d03a3a" stroke-width="0.55"/><rect x="5.9" y="7" width="3.2" height="2.6" rx="0.4" fill="#d8393a"/></svg>
<div style="position:absolute;left:69.6px;top:266.32px;font-size:6.686px;line-height:1;color:#525252;font-weight:normal;white-space:nowrap;transform:scaleX(0.8300);transform-origin:0 0;">Sketch4</div>
<div style="position:absolute;left:39.5px;top:276.79999999999995px;width:55.7px;height:10.2px;background:#f0f0f0;"></div>
<svg style="position:absolute;left:41px;top:278.4px;" width="9" height="7" viewBox="0 0 9 7"><path d="M0.6 3.2C2.2 0.8 6.4 0.8 8 3.2C6.4 5.6 2.2 5.6 0.6 3.2z" fill="none" stroke="#c2c2c2" stroke-width="0.9"/><circle cx="4.3" cy="3.2" r="1.1" fill="none" stroke="#c2c2c2" stroke-width="0.6"/><path d="M2.2 5.9L6.4 0.5" stroke="#c2c2c2" stroke-width="0.5"/></svg>
<svg style="position:absolute;left:53.4px;top:276.79999999999995px;" width="10" height="10" viewBox="0 0 10 10"><path d="M1.2 1.2h7.4v7.4H1.2z" fill="none" stroke="#9a9a9a" stroke-width="0.6"/><rect x="0.6" y="0.6" width="1.2" height="1.2" fill="#555"/><rect x="8.0" y="0.6" width="1.2" height="1.2" fill="#555"/><rect x="0.6" y="8.0" width="1.2" height="1.2" fill="#555"/><path d="M6.5 7.2v-0.7a1 1 0 0 1 2 0v0.7" fill="none" stroke="#d03a3a" stroke-width="0.55"/><rect x="5.9" y="7" width="3.2" height="2.6" rx="0.4" fill="#d8393a"/></svg>
<div style="position:absolute;left:69.6px;top:278.84px;font-size:6.686px;line-height:1;color:#525252;font-weight:normal;white-space:nowrap;transform:scaleX(0.8300);transform-origin:0 0;">Sketch5</div>
<div style="position:absolute;left:39.5px;top:289.31999999999994px;width:55.7px;height:10.2px;background:#f0f0f0;"></div>
<svg style="position:absolute;left:41px;top:290.91999999999996px;" width="9" height="7" viewBox="0 0 9 7"><path d="M0.6 3.2C2.2 0.8 6.4 0.8 8 3.2C6.4 5.6 2.2 5.6 0.6 3.2z" fill="none" stroke="#c2c2c2" stroke-width="0.9"/><circle cx="4.3" cy="3.2" r="1.1" fill="none" stroke="#c2c2c2" stroke-width="0.6"/><path d="M2.2 5.9L6.4 0.5" stroke="#c2c2c2" stroke-width="0.5"/></svg>
<svg style="position:absolute;left:53.4px;top:289.31999999999994px;" width="10" height="10" viewBox="0 0 10 10"><path d="M1.2 1.2h7.4v7.4H1.2z" fill="none" stroke="#9a9a9a" stroke-width="0.6"/><rect x="0.6" y="0.6" width="1.2" height="1.2" fill="#2d8fe0"/><rect x="8.0" y="0.6" width="1.2" height="1.2" fill="#2d8fe0"/><rect x="0.6" y="8.0" width="1.2" height="1.2" fill="#2d8fe0"/><path d="M5.4 9.4l0.3-1.2 2.8-2.8 0.9 0.9-2.8 2.8z" fill="#f3b21a"/><circle cx="9" cy="5.9" r="0.7" fill="#e5484d"/></svg>
<div style="position:absolute;left:69.6px;top:291.36px;font-size:6.686px;line-height:1;color:#525252;font-weight:normal;white-space:nowrap;transform:scaleX(0.8300);transform-origin:0 0;">Sketch6</div>
<div style="position:absolute;left:39.5px;top:301.84px;width:55.7px;height:10.2px;background:#f0f0f0;"></div>
<svg style="position:absolute;left:41px;top:303.44px;" width="9" height="7" viewBox="0 0 9 7"><path d="M0.6 3.2C2.2 0.8 6.4 0.8 8 3.2C6.4 5.6 2.2 5.6 0.6 3.2z" fill="none" stroke="#c2c2c2" stroke-width="0.9"/><circle cx="4.3" cy="3.2" r="1.1" fill="none" stroke="#c2c2c2" stroke-width="0.6"/><path d="M2.2 5.9L6.4 0.5" stroke="#c2c2c2" stroke-width="0.5"/></svg>
<svg style="position:absolute;left:53.4px;top:301.84px;" width="10" height="10" viewBox="0 0 10 10"><path d="M1.2 1.2h7.4v7.4H1.2z" fill="none" stroke="#9a9a9a" stroke-width="0.6"/><rect x="0.6" y="0.6" width="1.2" height="1.2" fill="#2d8fe0"/><rect x="8.0" y="0.6" width="1.2" height="1.2" fill="#2d8fe0"/><rect x="0.6" y="8.0" width="1.2" height="1.2" fill="#2d8fe0"/><path d="M5.4 9.4l0.3-1.2 2.8-2.8 0.9 0.9-2.8 2.8z" fill="#f3b21a"/><circle cx="9" cy="5.9" r="0.7" fill="#e5484d"/></svg>
<div style="position:absolute;left:69.6px;top:303.88px;font-size:6.686px;line-height:1;color:#525252;font-weight:normal;white-space:nowrap;transform:scaleX(0.8300);transform-origin:0 0;">Sketch7</div>
<div style="position:absolute;left:39.5px;top:314.35999999999996px;width:55.7px;height:10.2px;background:#f0f0f0;"></div>
<svg style="position:absolute;left:41px;top:315.96px;" width="9" height="7" viewBox="0 0 9 7"><path d="M0.6 3.2C2.2 0.8 6.4 0.8 8 3.2C6.4 5.6 2.2 5.6 0.6 3.2z" fill="none" stroke="#c2c2c2" stroke-width="0.9"/><circle cx="4.3" cy="3.2" r="1.1" fill="none" stroke="#c2c2c2" stroke-width="0.6"/><path d="M2.2 5.9L6.4 0.5" stroke="#c2c2c2" stroke-width="0.5"/></svg>
<svg style="position:absolute;left:53.4px;top:314.35999999999996px;" width="10" height="10" viewBox="0 0 10 10"><path d="M1.2 1.2h7.4v7.4H1.2z" fill="none" stroke="#9a9a9a" stroke-width="0.6"/><rect x="0.6" y="0.6" width="1.2" height="1.2" fill="#2d8fe0"/><rect x="8.0" y="0.6" width="1.2" height="1.2" fill="#2d8fe0"/><rect x="0.6" y="8.0" width="1.2" height="1.2" fill="#2d8fe0"/><path d="M5.4 9.4l0.3-1.2 2.8-2.8 0.9 0.9-2.8 2.8z" fill="#f3b21a"/><circle cx="9" cy="5.9" r="0.7" fill="#e5484d"/></svg>
<div style="position:absolute;left:69.6px;top:316.40px;font-size:6.686px;line-height:1;color:#525252;font-weight:normal;white-space:nowrap;transform:scaleX(0.8300);transform-origin:0 0;">Sketch8</div>
<div style="position:absolute;left:39.5px;top:326.88px;width:55.7px;height:10.2px;background:#f0f0f0;"></div>
<svg style="position:absolute;left:41px;top:328.48px;" width="9" height="7" viewBox="0 0 9 7"><path d="M0.6 3.2C2.2 0.8 6.4 0.8 8 3.2C6.4 5.6 2.2 5.6 0.6 3.2z" fill="none" stroke="#c2c2c2" stroke-width="0.9"/><circle cx="4.3" cy="3.2" r="1.1" fill="none" stroke="#c2c2c2" stroke-width="0.6"/><path d="M2.2 5.9L6.4 0.5" stroke="#c2c2c2" stroke-width="0.5"/></svg>
<svg style="position:absolute;left:53.4px;top:326.88px;" width="10" height="10" viewBox="0 0 10 10"><path d="M1.2 1.2h7.4v7.4H1.2z" fill="none" stroke="#9a9a9a" stroke-width="0.6"/><rect x="0.6" y="0.6" width="1.2" height="1.2" fill="#555"/><rect x="8.0" y="0.6" width="1.2" height="1.2" fill="#555"/><rect x="0.6" y="8.0" width="1.2" height="1.2" fill="#555"/><path d="M6.5 7.2v-0.7a1 1 0 0 1 2 0v0.7" fill="none" stroke="#d03a3a" stroke-width="0.55"/><rect x="5.9" y="7" width="3.2" height="2.6" rx="0.4" fill="#d8393a"/></svg>
<div style="position:absolute;left:69.6px;top:328.92px;font-size:6.686px;line-height:1;color:#525252;font-weight:normal;white-space:nowrap;transform:scaleX(0.8300);transform-origin:0 0;">Sketch9</div>
<div style="position:absolute;left:39.5px;top:339.4px;width:59.900000000000006px;height:10.2px;background:#f0f0f0;"></div>
<svg style="position:absolute;left:41px;top:341.0px;" width="9" height="7" viewBox="0 0 9 7"><path d="M0.6 3.2C2.2 0.8 6.4 0.8 8 3.2C6.4 5.6 2.2 5.6 0.6 3.2z" fill="none" stroke="#c2c2c2" stroke-width="0.9"/><circle cx="4.3" cy="3.2" r="1.1" fill="none" stroke="#c2c2c2" stroke-width="0.6"/><path d="M2.2 5.9L6.4 0.5" stroke="#c2c2c2" stroke-width="0.5"/></svg>
<svg style="position:absolute;left:53.4px;top:339.4px;" width="10" height="10" viewBox="0 0 10 10"><path d="M1.2 1.2h7.4v7.4H1.2z" fill="none" stroke="#9a9a9a" stroke-width="0.6"/><rect x="0.6" y="0.6" width="1.2" height="1.2" fill="#555"/><rect x="8.0" y="0.6" width="1.2" height="1.2" fill="#555"/><rect x="0.6" y="8.0" width="1.2" height="1.2" fill="#555"/><path d="M6.5 7.2v-0.7a1 1 0 0 1 2 0v0.7" fill="none" stroke="#d03a3a" stroke-width="0.55"/><rect x="5.9" y="7" width="3.2" height="2.6" rx="0.4" fill="#d8393a"/></svg>
<div style="position:absolute;left:69.6px;top:341.44px;font-size:6.686px;line-height:1;color:#525252;font-weight:normal;white-space:nowrap;transform:scaleX(0.8300);transform-origin:0 0;">Sketch10</div>
<div style="position:absolute;left:39.5px;top:351.91999999999996px;width:59.900000000000006px;height:10.2px;background:#f0f0f0;"></div>
<svg style="position:absolute;left:41px;top:353.52px;" width="9" height="7" viewBox="0 0 9 7"><path d="M0.6 3.2C2.2 0.8 6.4 0.8 8 3.2C6.4 5.6 2.2 5.6 0.6 3.2z" fill="none" stroke="#c2c2c2" stroke-width="0.9"/><circle cx="4.3" cy="3.2" r="1.1" fill="none" stroke="#c2c2c2" stroke-width="0.6"/><path d="M2.2 5.9L6.4 0.5" stroke="#c2c2c2" stroke-width="0.5"/></svg>
<svg style="position:absolute;left:53.4px;top:351.91999999999996px;" width="10" height="10" viewBox="0 0 10 10"><path d="M1.2 1.2h7.4v7.4H1.2z" fill="none" stroke="#9a9a9a" stroke-width="0.6"/><rect x="0.6" y="0.6" width="1.2" height="1.2" fill="#2d8fe0"/><rect x="8.0" y="0.6" width="1.2" height="1.2" fill="#2d8fe0"/><rect x="0.6" y="8.0" width="1.2" height="1.2" fill="#2d8fe0"/><path d="M5.4 9.4l0.3-1.2 2.8-2.8 0.9 0.9-2.8 2.8z" fill="#f3b21a"/><circle cx="9" cy="5.9" r="0.7" fill="#e5484d"/></svg>
<div style="position:absolute;left:69.6px;top:353.96px;font-size:6.686px;line-height:1;color:#525252;font-weight:normal;white-space:nowrap;transform:scaleX(0.8300);transform-origin:0 0;">Sketch11</div>
<div style="position:absolute;left:39.5px;top:364.43999999999994px;width:59.900000000000006px;height:10.2px;background:#f0f0f0;"></div>
<svg style="position:absolute;left:41px;top:366.03999999999996px;" width="9" height="7" viewBox="0 0 9 7"><path d="M0.6 3.2C2.2 0.8 6.4 0.8 8 3.2C6.4 5.6 2.2 5.6 0.6 3.2z" fill="none" stroke="#c2c2c2" stroke-width="0.9"/><circle cx="4.3" cy="3.2" r="1.1" fill="none" stroke="#c2c2c2" stroke-width="0.6"/><path d="M2.2 5.9L6.4 0.5" stroke="#c2c2c2" stroke-width="0.5"/></svg>
<svg style="position:absolute;left:53.4px;top:364.43999999999994px;" width="10" height="10" viewBox="0 0 10 10"><path d="M1.2 1.2h7.4v7.4H1.2z" fill="none" stroke="#9a9a9a" stroke-width="0.6"/><rect x="0.6" y="0.6" width="1.2" height="1.2" fill="#555"/><rect x="8.0" y="0.6" width="1.2" height="1.2" fill="#555"/><rect x="0.6" y="8.0" width="1.2" height="1.2" fill="#555"/><path d="M6.5 7.2v-0.7a1 1 0 0 1 2 0v0.7" fill="none" stroke="#d03a3a" stroke-width="0.55"/><rect x="5.9" y="7" width="3.2" height="2.6" rx="0.4" fill="#d8393a"/></svg>
<div style="position:absolute;left:69.6px;top:366.48px;font-size:6.686px;line-height:1;color:#525252;font-weight:normal;white-space:nowrap;transform:scaleX(0.8300);transform-origin:0 0;">Sketch12</div>
<div style="position:absolute;left:39.5px;top:376.9599999999999px;width:59.900000000000006px;height:10.2px;background:#f0f0f0;"></div>
<svg style="position:absolute;left:41px;top:378.55999999999995px;" width="9" height="7" viewBox="0 0 9 7"><path d="M0.6 3.2C2.2 0.8 6.4 0.8 8 3.2C6.4 5.6 2.2 5.6 0.6 3.2z" fill="none" stroke="#c2c2c2" stroke-width="0.9"/><circle cx="4.3" cy="3.2" r="1.1" fill="none" stroke="#c2c2c2" stroke-width="0.6"/><path d="M2.2 5.9L6.4 0.5" stroke="#c2c2c2" stroke-width="0.5"/></svg>
<svg style="position:absolute;left:53.4px;top:376.9599999999999px;" width="10" height="10" viewBox="0 0 10 10"><path d="M1.2 1.2h7.4v7.4H1.2z" fill="none" stroke="#9a9a9a" stroke-width="0.6"/><rect x="0.6" y="0.6" width="1.2" height="1.2" fill="#2d8fe0"/><rect x="8.0" y="0.6" width="1.2" height="1.2" fill="#2d8fe0"/><rect x="0.6" y="8.0" width="1.2" height="1.2" fill="#2d8fe0"/><path d="M5.4 9.4l0.3-1.2 2.8-2.8 0.9 0.9-2.8 2.8z" fill="#f3b21a"/><circle cx="9" cy="5.9" r="0.7" fill="#e5484d"/></svg>
<div style="position:absolute;left:69.6px;top:379.00px;font-size:6.686px;line-height:1;color:#525252;font-weight:normal;white-space:nowrap;transform:scaleX(0.8300);transform-origin:0 0;">Sketch13</div>
<div style="position:absolute;left:39.5px;top:389.48px;width:59.900000000000006px;height:10.2px;background:#f0f0f0;"></div>
<svg style="position:absolute;left:41px;top:391.08000000000004px;" width="9" height="7" viewBox="0 0 9 7"><path d="M0.6 3.2C2.2 0.8 6.4 0.8 8 3.2C6.4 5.6 2.2 5.6 0.6 3.2z" fill="none" stroke="#c2c2c2" stroke-width="0.9"/><circle cx="4.3" cy="3.2" r="1.1" fill="none" stroke="#c2c2c2" stroke-width="0.6"/><path d="M2.2 5.9L6.4 0.5" stroke="#c2c2c2" stroke-width="0.5"/></svg>
<svg style="position:absolute;left:53.4px;top:389.48px;" width="10" height="10" viewBox="0 0 10 10"><path d="M1.2 1.2h7.4v7.4H1.2z" fill="none" stroke="#9a9a9a" stroke-width="0.6"/><rect x="0.6" y="0.6" width="1.2" height="1.2" fill="#2d8fe0"/><rect x="8.0" y="0.6" width="1.2" height="1.2" fill="#2d8fe0"/><rect x="0.6" y="8.0" width="1.2" height="1.2" fill="#2d8fe0"/><path d="M5.4 9.4l0.3-1.2 2.8-2.8 0.9 0.9-2.8 2.8z" fill="#f3b21a"/><circle cx="9" cy="5.9" r="0.7" fill="#e5484d"/></svg>
<div style="position:absolute;left:69.6px;top:391.52px;font-size:6.686px;line-height:1;color:#525252;font-weight:normal;white-space:nowrap;transform:scaleX(0.8300);transform-origin:0 0;">Sketch14</div>
<div style="position:absolute;left:39.5px;top:402.0px;width:59.900000000000006px;height:10.2px;background:#f0f0f0;"></div>
<svg style="position:absolute;left:41px;top:403.6px;" width="9" height="7" viewBox="0 0 9 7"><path d="M0.6 3.2C2.2 0.8 6.4 0.8 8 3.2C6.4 5.6 2.2 5.6 0.6 3.2z" fill="none" stroke="#c2c2c2" stroke-width="0.9"/><circle cx="4.3" cy="3.2" r="1.1" fill="none" stroke="#c2c2c2" stroke-width="0.6"/><path d="M2.2 5.9L6.4 0.5" stroke="#c2c2c2" stroke-width="0.5"/></svg>
<svg style="position:absolute;left:53.4px;top:402.0px;" width="10" height="10" viewBox="0 0 10 10"><path d="M1.2 1.2h7.4v7.4H1.2z" fill="none" stroke="#9a9a9a" stroke-width="0.6"/><rect x="0.6" y="0.6" width="1.2" height="1.2" fill="#2d8fe0"/><rect x="8.0" y="0.6" width="1.2" height="1.2" fill="#2d8fe0"/><rect x="0.6" y="8.0" width="1.2" height="1.2" fill="#2d8fe0"/><path d="M5.4 9.4l0.3-1.2 2.8-2.8 0.9 0.9-2.8 2.8z" fill="#f3b21a"/><circle cx="9" cy="5.9" r="0.7" fill="#e5484d"/></svg>
<div style="position:absolute;left:69.6px;top:404.04px;font-size:6.686px;line-height:1;color:#525252;font-weight:normal;white-space:nowrap;transform:scaleX(0.8300);transform-origin:0 0;">Sketch15</div>
<div style="position:absolute;left:39.5px;top:414.52px;width:59.900000000000006px;height:10.2px;background:#f0f0f0;"></div>
<svg style="position:absolute;left:41px;top:416.12px;" width="9" height="7" viewBox="0 0 9 7"><path d="M0.6 3.2C2.2 0.8 6.4 0.8 8 3.2C6.4 5.6 2.2 5.6 0.6 3.2z" fill="none" stroke="#c2c2c2" stroke-width="0.9"/><circle cx="4.3" cy="3.2" r="1.1" fill="none" stroke="#c2c2c2" stroke-width="0.6"/><path d="M2.2 5.9L6.4 0.5" stroke="#c2c2c2" stroke-width="0.5"/></svg>
<svg style="position:absolute;left:53.4px;top:414.52px;" width="10" height="10" viewBox="0 0 10 10"><path d="M1.2 1.2h7.4v7.4H1.2z" fill="none" stroke="#9a9a9a" stroke-width="0.6"/><rect x="0.6" y="0.6" width="1.2" height="1.2" fill="#2d8fe0"/><rect x="8.0" y="0.6" width="1.2" height="1.2" fill="#2d8fe0"/><rect x="0.6" y="8.0" width="1.2" height="1.2" fill="#2d8fe0"/><path d="M5.4 9.4l0.3-1.2 2.8-2.8 0.9 0.9-2.8 2.8z" fill="#f3b21a"/><circle cx="9" cy="5.9" r="0.7" fill="#e5484d"/></svg>
<div style="position:absolute;left:69.6px;top:416.56px;font-size:6.686px;line-height:1;color:#525252;font-weight:normal;white-space:nowrap;transform:scaleX(0.8300);transform-origin:0 0;">Sketch16</div>
<div style="position:absolute;left:39.5px;top:427.03999999999996px;width:59.900000000000006px;height:10.2px;background:#f0f0f0;"></div>
<svg style="position:absolute;left:41px;top:428.64px;" width="9" height="7" viewBox="0 0 9 7"><path d="M0.6 3.2C2.2 0.8 6.4 0.8 8 3.2C6.4 5.6 2.2 5.6 0.6 3.2z" fill="none" stroke="#c2c2c2" stroke-width="0.9"/><circle cx="4.3" cy="3.2" r="1.1" fill="none" stroke="#c2c2c2" stroke-width="0.6"/><path d="M2.2 5.9L6.4 0.5" stroke="#c2c2c2" stroke-width="0.5"/></svg>
<svg style="position:absolute;left:53.4px;top:427.03999999999996px;" width="10" height="10" viewBox="0 0 10 10"><path d="M1.2 1.2h7.4v7.4H1.2z" fill="none" stroke="#9a9a9a" stroke-width="0.6"/><rect x="0.6" y="0.6" width="1.2" height="1.2" fill="#2d8fe0"/><rect x="8.0" y="0.6" width="1.2" height="1.2" fill="#2d8fe0"/><rect x="0.6" y="8.0" width="1.2" height="1.2" fill="#2d8fe0"/><path d="M5.4 9.4l0.3-1.2 2.8-2.8 0.9 0.9-2.8 2.8z" fill="#f3b21a"/><circle cx="9" cy="5.9" r="0.7" fill="#e5484d"/></svg>
<div style="position:absolute;left:69.6px;top:429.08px;font-size:6.686px;line-height:1;color:#525252;font-weight:normal;white-space:nowrap;transform:scaleX(0.8300);transform-origin:0 0;">Sketch17</div>
<div style="position:absolute;left:39.5px;top:439.55999999999995px;width:59.900000000000006px;height:10.2px;background:#f0f0f0;"></div>
<svg style="position:absolute;left:41px;top:441.15999999999997px;" width="9" height="7" viewBox="0 0 9 7"><path d="M0.6 3.2C2.2 0.8 6.4 0.8 8 3.2C6.4 5.6 2.2 5.6 0.6 3.2z" fill="none" stroke="#c2c2c2" stroke-width="0.9"/><circle cx="4.3" cy="3.2" r="1.1" fill="none" stroke="#c2c2c2" stroke-width="0.6"/><path d="M2.2 5.9L6.4 0.5" stroke="#c2c2c2" stroke-width="0.5"/></svg>
<svg style="position:absolute;left:53.4px;top:439.55999999999995px;" width="10" height="10" viewBox="0 0 10 10"><path d="M1.2 1.2h7.4v7.4H1.2z" fill="none" stroke="#9a9a9a" stroke-width="0.6"/><rect x="0.6" y="0.6" width="1.2" height="1.2" fill="#555"/><rect x="8.0" y="0.6" width="1.2" height="1.2" fill="#555"/><rect x="0.6" y="8.0" width="1.2" height="1.2" fill="#555"/><path d="M6.5 7.2v-0.7a1 1 0 0 1 2 0v0.7" fill="none" stroke="#d03a3a" stroke-width="0.55"/><rect x="5.9" y="7" width="3.2" height="2.6" rx="0.4" fill="#d8393a"/></svg>
<div style="position:absolute;left:69.6px;top:441.60px;font-size:6.686px;line-height:1;color:#525252;font-weight:normal;white-space:nowrap;transform:scaleX(0.8300);transform-origin:0 0;">Sketch18</div>
<div style="position:absolute;left:39.5px;top:452.0799999999999px;width:59.900000000000006px;height:10.2px;background:#f0f0f0;"></div>
<svg style="position:absolute;left:41px;top:453.67999999999995px;" width="9" height="7" viewBox="0 0 9 7"><path d="M0.6 3.2C2.2 0.8 6.4 0.8 8 3.2C6.4 5.6 2.2 5.6 0.6 3.2z" fill="none" stroke="#c2c2c2" stroke-width="0.9"/><circle cx="4.3" cy="3.2" r="1.1" fill="none" stroke="#c2c2c2" stroke-width="0.6"/><path d="M2.2 5.9L6.4 0.5" stroke="#c2c2c2" stroke-width="0.5"/></svg>
<svg style="position:absolute;left:53.4px;top:452.0799999999999px;" width="10" height="10" viewBox="0 0 10 10"><path d="M1.2 1.2h7.4v7.4H1.2z" fill="none" stroke="#9a9a9a" stroke-width="0.6"/><rect x="0.6" y="0.6" width="1.2" height="1.2" fill="#2d8fe0"/><rect x="8.0" y="0.6" width="1.2" height="1.2" fill="#2d8fe0"/><rect x="0.6" y="8.0" width="1.2" height="1.2" fill="#2d8fe0"/><path d="M5.4 9.4l0.3-1.2 2.8-2.8 0.9 0.9-2.8 2.8z" fill="#f3b21a"/><circle cx="9" cy="5.9" r="0.7" fill="#e5484d"/></svg>
<div style="position:absolute;left:69.6px;top:454.12px;font-size:6.686px;line-height:1;color:#525252;font-weight:normal;white-space:nowrap;transform:scaleX(0.8300);transform-origin:0 0;">Sketch19</div>
<div style="position:absolute;left:39.5px;top:464.5999999999999px;width:59.900000000000006px;height:10.2px;background:#f0f0f0;"></div>
<svg style="position:absolute;left:41px;top:466.19999999999993px;" width="9" height="7" viewBox="0 0 9 7"><path d="M0.6 3.2C2.2 0.8 6.4 0.8 8 3.2C6.4 5.6 2.2 5.6 0.6 3.2z" fill="none" stroke="#c2c2c2" stroke-width="0.9"/><circle cx="4.3" cy="3.2" r="1.1" fill="none" stroke="#c2c2c2" stroke-width="0.6"/><path d="M2.2 5.9L6.4 0.5" stroke="#c2c2c2" stroke-width="0.5"/></svg>
<svg style="position:absolute;left:53.4px;top:464.5999999999999px;" width="10" height="10" viewBox="0 0 10 10"><path d="M1.2 1.2h7.4v7.4H1.2z" fill="none" stroke="#9a9a9a" stroke-width="0.6"/><rect x="0.6" y="0.6" width="1.2" height="1.2" fill="#2d8fe0"/><rect x="8.0" y="0.6" width="1.2" height="1.2" fill="#2d8fe0"/><rect x="0.6" y="8.0" width="1.2" height="1.2" fill="#2d8fe0"/><path d="M5.4 9.4l0.3-1.2 2.8-2.8 0.9 0.9-2.8 2.8z" fill="#f3b21a"/><circle cx="9" cy="5.9" r="0.7" fill="#e5484d"/></svg>
<div style="position:absolute;left:69.6px;top:466.64px;font-size:6.686px;line-height:1;color:#525252;font-weight:normal;white-space:nowrap;transform:scaleX(0.8300);transform-origin:0 0;">Sketch20</div>
<div style="position:absolute;left:2.2px;top:501px;width:156.6px;height:12.6px;background:#f0f0f0;border:0.7px solid #d8d8d8;"></div>
<div style="position:absolute;left:15.1px;top:504.21px;font-size:6.250px;line-height:1;color:#777;font-weight:normal;white-space:nowrap;transform:scaleX(0.8229);transform-origin:0 0;">COMMENTS</div>
<svg style="position:absolute;left:146.5px;top:504px;" width="7" height="7" viewBox="0 0 7 7"><circle cx="3.25" cy="3.25" r="2.5" fill="#333"/><path d="M2.6 2.2l1.6 1.05-1.6 1.05z" fill="#fff"/></svg>
<div style="position:absolute;left:155.5px;top:505px;width:1.8px;height:5.5px;background:#c0c0c0;"></div>
<svg style="position:absolute;left:0;top:495px" width="1000" height="22" viewBox="0 495 1000 22"><rect x="437.7" y="501.3" width="124" height="12" fill="#f0f0f0"/><path d="M443.7 503.2v8.6" stroke="#9a9a9a" stroke-width="1.4"/><path d="M442.2 504.6l1.5-1.6 1.5 1.6z" fill="#888"/><ellipse cx="443.7" cy="508" rx="4.2" ry="1.6" fill="none" stroke="#666" stroke-width="0.8"/><path d="M439.2 508.6l1.6-1.2v2.4z" fill="#222"/><path d="M450.7 506.6h2.6l-1.3 1.5z" fill="#333"/><path d="M456.6 506.2l1.4-2.2h1.4l0.8 1h1.8l0.8-1h1.4l1.3 2.2v5.6h-8.9z" fill="#b8b8b8" stroke="#8a8a8a" stroke-width="0.5"/><rect x="457.8" y="507.4" width="6.6" height="2.2" fill="#8e8e8e"/><path d="M472.6 511.8c-1.6-1-2.6-2.6-2.4-4.2l1.2 0.6v-3.4c0-0.7 1.1-0.7 1.1 0v2.2v-3.2c0-0.7 1.2-0.7 1.2 0v3v-2.8c0-0.7 1.2-0.7 1.2 0v3v-2.2c0-0.7 1.2-0.7 1.2 0v4.6c0 1.4-0.8 2.6-1.6 3.4z" fill="#fafafa" stroke="#8a8a8a" stroke-width="0.7"/><circle cx="487.2" cy="507.2" r="2.5" fill="#e4f2f6" stroke="#666" stroke-width="0.8"/><path d="M489 509l2.6 2.4" stroke="#333" stroke-width="1.1"/><path d="M491.6 503.8v1.8" stroke="#888" stroke-width="0.8"/><circle cx="500.8" cy="506.8" r="3.3" fill="#e8f4f6" stroke="#777" stroke-width="0.8"/><path d="M503.1 509.2l2.8 2.6" stroke="#222" stroke-width="1.2"/><path d="M497.4 511.4h0.6M499.4 511.6h0.6M505.6 503.6v0.6" stroke="#888" stroke-width="0.5"/><path d="M509.3 506.6h2.6l-1.3 1.5z" fill="#333"/><rect x="514.4" y="503.6" width="8.2" height="6.2" rx="0.6" fill="#7f9fd0" stroke="#8a8a8a" stroke-width="0.8"/><path d="M517 510.2h3l0.5 1.4h-4z" fill="#777"/><path d="M524.7 506.6h2.6l-1.3 1.5z" fill="#333"/><defs><linearGradient id="ngr" x1="0" y1="0" x2="0" y2="1"><stop offset="0" stop-color="#b0b0b0"/><stop offset="1" stop-color="#8a8c92"/></linearGradient></defs><rect x="530.7" y="503.6" width="8.2" height="8.4" rx="0.5" fill="url(#ngr)"/><path d="M533.4 503.6v8.4M536.2 503.6v8.4M530.7 506.4h8.2M530.7 509.2h8.2" stroke="#c4c4c4" stroke-width="0.3"/><path d="M540.9 506.6h2.6l-1.3 1.5z" fill="#333"/><rect x="546.7" y="504" width="8.2" height="7.6" rx="0.5" fill="#5a80bb"/><rect x="547.6" y="504.8" width="3" height="2.6" fill="#a9c4ea"/><rect x="551.2" y="504.8" width="3" height="2.6" fill="#a9c4ea"/><rect x="547.6" y="508.2" width="3" height="2.6" fill="#a9c4ea"/><rect x="551.2" y="508.2" width="3" height="2.6" fill="#a9c4ea"/><path d="M557.2 506.6h2.6l-1.3 1.5z" fill="#333"/></svg>
<div style="position:absolute;left:0px;top:516px;width:1000px;height:26px;background:#f0f0f0;border-top:1px solid #d6d6d6;"></div>
<svg style="position:absolute;left:0;top:516px" width="1000" height="26" viewBox="0 516 1000 26"><path d="M5.5 525.6h1.3v7.6H5.5zM12.1 525.6v7.6l-5.3-3.8z" fill="#444"/><path d="M23.7 525.6v7.6l-5.5-3.8zM23.7 527.4h1.4v4h-1.4z" fill="#444"/><path d="M31.9 525.6l6.1 3.8-6.1 3.8z" fill="#444"/><path d="M45.3 525.6v7.6l5.5-3.8zM43.9 527.4h1.4v4h-1.4z" fill="#444"/><path d="M57.8 525.6v7.6l4.9-3.8zM62.7 525.6h1.3v7.6h-1.3z" fill="#444"/><rect x="76.5" y="525.4" width="7.2" height="7.2" fill="none" stroke="#999" stroke-width="0.5"/><rect x="75.8" y="524.6999999999999" width="1.4" height="1.4" fill="#2d90e2"/><rect x="82.99999999999999" y="524.6999999999999" width="1.4" height="1.4" fill="#2d90e2"/><rect x="75.8" y="531.9" width="1.4" height="1.4" fill="#2d90e2"/><path d="M80.69999999999999 533.2l0.4-1.5 2.6-2.6 1.1 1.1-2.6 2.6z" fill="#f3b21a"/><circle cx="84.1" cy="529.6" r="0.8" fill="#e5484d"/><path d="M80.3 535.2v2.3" stroke="#aaa" stroke-width="0.5"/><path d="M88.88999999999999 532.2l1 1h5.8l1-1z" fill="#bbb"/><path d="M88.88999999999999 526.8l1.4-1.4h5.6l-1.3 1.4z" fill="#8fcaf3"/><path d="M94.58999999999999 526.8l1.3-1.4v5.8l-1.3 1.4z" fill="#3b8ccc"/><rect x="88.88999999999999" y="526.8" width="5.7" height="5.8" fill="#5aaceb"/><path d="M96.78999999999999 526v6" stroke="#555" stroke-width="0.5"/><path d="M92.78999999999999 535.2v2.3" stroke="#aaa" stroke-width="0.5"/><rect x="101.48" y="525.4" width="7.2" height="7.2" fill="none" stroke="#999" stroke-width="0.5"/><rect x="100.78" y="524.6999999999999" width="1.4" height="1.4" fill="#2d90e2"/><rect x="107.97999999999999" y="524.6999999999999" width="1.4" height="1.4" fill="#2d90e2"/><rect x="100.78" y="531.9" width="1.4" height="1.4" fill="#2d90e2"/><path d="M105.67999999999999 533.2l0.4-1.5 2.6-2.6 1.1 1.1-2.6 2.6z" fill="#f3b21a"/><circle cx="109.08" cy="529.6" r="0.8" fill="#e5484d"/><path d="M105.28 535.2v2.3" stroke="#aaa" stroke-width="0.5"/><path d="M113.86999999999999 532.2l1 1h5.8l1-1z" fill="#bbb"/><path d="M113.86999999999999 526.8l1.4-1.4h5.6l-1.3 1.4z" fill="#8fcaf3"/><path d="M119.57 526.8l1.3-1.4v5.8l-1.3 1.4z" fill="#3b8ccc"/><rect x="113.86999999999999" y="526.8" width="5.7" height="5.8" fill="#5aaceb"/><path d="M121.77 526v6" stroke="#555" stroke-width="0.5"/><path d="M117.77 535.2v2.3" stroke="#aaa" stroke-width="0.5"/><rect x="126.46" y="525.4" width="7.2" height="7.2" fill="none" stroke="#999" stroke-width="0.5"/><rect x="125.75999999999999" y="524.6999999999999" width="1.4" height="1.4" fill="#2d90e2"/><rect x="132.96" y="524.6999999999999" width="1.4" height="1.4" fill="#2d90e2"/><rect x="125.75999999999999" y="531.9" width="1.4" height="1.4" fill="#2d90e2"/><path d="M130.66 533.2l0.4-1.5 2.6-2.6 1.1 1.1-2.6 2.6z" fill="#f3b21a"/><circle cx="134.06" cy="529.6" r="0.8" fill="#e5484d"/><path d="M130.26 535.2v2.3" stroke="#aaa" stroke-width="0.5"/><path d="M138.85000000000002 532.2l1 1h5.8l1-1z" fill="#bbb"/><path d="M138.85000000000002 526.8l1.4-1.4h5.6l-1.3 1.4z" fill="#8fcaf3"/><path d="M144.55 526.8l1.3-1.4v5.8l-1.3 1.4z" fill="#3b8ccc"/><rect x="138.85000000000002" y="526.8" width="5.7" height="5.8" fill="#5aaceb"/><path d="M146.75 526v6" stroke="#555" stroke-width="0.5"/><path d="M142.75 535.2v2.3" stroke="#aaa" stroke-width="0.5"/><rect x="151.44000000000003" y="525.4" width="7.2" height="7.2" fill="none" stroke="#999" stroke-width="0.5"/><rect x="150.74000000000004" y="524.6999999999999" width="1.4" height="1.4" fill="#2d90e2"/><rect x="157.94000000000003" y="524.6999999999999" width="1.4" height="1.4" fill="#2d90e2"/><rect x="150.74000000000004" y="531.9" width="1.4" height="1.4" fill="#2d90e2"/><path d="M155.64000000000001 533.2l0.4-1.5 2.6-2.6 1.1 1.1-2.6 2.6z" fill="#f3b21a"/><circle cx="159.04000000000002" cy="529.6" r="0.8" fill="#e5484d"/><path d="M155.24 535.2v2.3" stroke="#aaa" stroke-width="0.5"/><path d="M163.83000000000004 532.2l1 1h5.8l1-1z" fill="#bbb"/><path d="M163.83000000000004 526.8l1.4-1.4h5.6l-1.3 1.4z" fill="#8fcaf3"/><path d="M169.53000000000003 526.8l1.3-1.4v5.8l-1.3 1.4z" fill="#3b8ccc"/><rect x="163.83000000000004" y="526.8" width="5.7" height="5.8" fill="#5aaceb"/><path d="M171.73000000000002 526v6" stroke="#555" stroke-width="0.5"/><path d="M167.73000000000002 535.2v2.3" stroke="#aaa" stroke-width="0.5"/><rect x="176.42000000000002" y="525.4" width="7.2" height="7.2" fill="none" stroke="#999" stroke-width="0.5"/><rect x="175.72000000000003" y="524.6999999999999" width="1.4" height="1.4" fill="#2d90e2"/><rect x="182.92000000000002" y="524.6999999999999" width="1.4" height="1.4" fill="#2d90e2"/><rect x="175.72000000000003" y="531.9" width="1.4" height="1.4" fill="#2d90e2"/><path d="M180.62 533.2l0.4-1.5 2.6-2.6 1.1 1.1-2.6 2.6z" fill="#f3b21a"/><circle cx="184.02" cy="529.6" r="0.8" fill="#e5484d"/><path d="M180.22 535.2v2.3" stroke="#aaa" stroke-width="0.5"/><path d="M188.81 532.2l1 1h5.8l1-1z" fill="#bbb"/><path d="M188.81 526.8l1.4-1.4h5.6l-1.3 1.4z" fill="#8fcaf3"/><path d="M194.51 526.8l1.3-1.4v5.8l-1.3 1.4z" fill="#3b8ccc"/><rect x="188.81" y="526.8" width="5.7" height="5.8" fill="#5aaceb"/><path d="M196.70999999999998 526v6" stroke="#555" stroke-width="0.5"/><path d="M192.70999999999998 535.2v2.3" stroke="#aaa" stroke-width="0.5"/><path d="M205.2 525v8.4M201.2 529.2h8" stroke="#333" stroke-width="0.8"/><path d="M205.2 524.5l-1.2 1.6h2.4zM205.2 533.9l-1.2-1.6h2.4zM200.7 529.2l1.6-1.2v2.4zM209.7 529.2l-1.6-1.2v2.4z" fill="#222"/><path d="M205.2 535.2v2.3" stroke="#aaa" stroke-width="0.5"/><rect x="213.89000000000001" y="525.4" width="7.2" height="7.2" fill="none" stroke="#999" stroke-width="0.5"/><rect x="213.19000000000003" y="524.6999999999999" width="1.4" height="1.4" fill="#2d90e2"/><rect x="220.39000000000001" y="524.6999999999999" width="1.4" height="1.4" fill="#2d90e2"/><rect x="213.19000000000003" y="531.9" width="1.4" height="1.4" fill="#2d90e2"/><path d="M218.09 533.2l0.4-1.5 2.6-2.6 1.1 1.1-2.6 2.6z" fill="#f3b21a"/><circle cx="221.49" cy="529.6" r="0.8" fill="#e5484d"/><path d="M217.69 535.2v2.3" stroke="#aaa" stroke-width="0.5"/><path d="M226.28000000000003 532.2l1 1h5.8l1-1z" fill="#bbb"/><path d="M226.28000000000003 526.8l1.4-1.4h5.6l-1.3 1.4z" fill="#8fcaf3"/><path d="M231.98000000000002 526.8l1.3-1.4v5.8l-1.3 1.4z" fill="#3b8ccc"/><rect x="226.28000000000003" y="526.8" width="5.7" height="5.8" fill="#5aaceb"/><path d="M234.18 526v6" stroke="#555" stroke-width="0.5"/><path d="M230.18 535.2v2.3" stroke="#aaa" stroke-width="0.5"/><rect x="238.87000000000003" y="525.4" width="7.2" height="7.2" fill="none" stroke="#999" stroke-width="0.5"/><rect x="238.17000000000004" y="524.6999999999999" width="1.4" height="1.4" fill="#2d90e2"/><rect x="245.37000000000003" y="524.6999999999999" width="1.4" height="1.4" fill="#2d90e2"/><rect x="238.17000000000004" y="531.9" width="1.4" height="1.4" fill="#2d90e2"/><path d="M243.07000000000002 533.2l0.4-1.5 2.6-2.6 1.1 1.1-2.6 2.6z" fill="#f3b21a"/><circle cx="246.47000000000003" cy="529.6" r="0.8" fill="#e5484d"/><path d="M242.67000000000002 535.2v2.3" stroke="#aaa" stroke-width="0.5"/><path d="M251.26000000000005 532.2l1 1h5.8l1-1z" fill="#bbb"/><path d="M251.26000000000005 526.8l1.4-1.4h5.6l-1.3 1.4z" fill="#8fcaf3"/><path d="M256.96000000000004 526.8l1.3-1.4v5.8l-1.3 1.4z" fill="#3b8ccc"/><rect x="251.26000000000005" y="526.8" width="5.7" height="5.8" fill="#5aaceb"/><path d="M259.16 526v6" stroke="#555" stroke-width="0.5"/><path d="M255.16000000000003 535.2v2.3" stroke="#aaa" stroke-width="0.5"/><path d="M263.75 532.2l1 1h5.8l1-1z" fill="#bbb"/><path d="M263.75 526.8l1.4-1.4h5.6l-1.3 1.4z" fill="#8fcaf3"/><path d="M269.45 526.8l1.3-1.4v5.8l-1.3 1.4z" fill="#3b8ccc"/><rect x="263.75" y="526.8" width="5.7" height="5.8" fill="#5aaceb"/><path d="M271.65 526v6" stroke="#555" stroke-width="0.5"/><path d="M267.65 535.2v2.3" stroke="#aaa" stroke-width="0.5"/><path d="M276.24 532.2l1 1h5.8l1-1z" fill="#bbb"/><path d="M276.24 526.8l1.4-1.4h5.6l-1.3 1.4z" fill="#8fcaf3"/><path d="M281.94 526.8l1.3-1.4v5.8l-1.3 1.4z" fill="#3b8ccc"/><rect x="276.24" y="526.8" width="5.7" height="5.8" fill="#5aaceb"/><path d="M284.14 526v6" stroke="#555" stroke-width="0.5"/><path d="M280.14 535.2v2.3" stroke="#aaa" stroke-width="0.5"/><path d="M288.73 532.2l1 1h5.8l1-1z" fill="#bbb"/><path d="M288.73 526.8l1.4-1.4h5.6l-1.3 1.4z" fill="#8fcaf3"/><path d="M294.43 526.8l1.3-1.4v5.8l-1.3 1.4z" fill="#3b8ccc"/><rect x="288.73" y="526.8" width="5.7" height="5.8" fill="#5aaceb"/><path d="M296.63 526v6" stroke="#555" stroke-width="0.5"/><path d="M292.63 535.2v2.3" stroke="#aaa" stroke-width="0.5"/><rect x="301.32" y="525.4" width="7.2" height="7.2" fill="none" stroke="#999" stroke-width="0.5"/><rect x="300.62" y="524.6999999999999" width="1.4" height="1.4" fill="#2d90e2"/><rect x="307.82000000000005" y="524.6999999999999" width="1.4" height="1.4" fill="#2d90e2"/><rect x="300.62" y="531.9" width="1.4" height="1.4" fill="#2d90e2"/><path d="M305.52000000000004 533.2l0.4-1.5 2.6-2.6 1.1 1.1-2.6 2.6z" fill="#f3b21a"/><circle cx="308.92" cy="529.6" r="0.8" fill="#e5484d"/><path d="M305.12 535.2v2.3" stroke="#aaa" stroke-width="0.5"/><path d="M313.71000000000004 532.2l1 1h5.8l1-1z" fill="#bbb"/><path d="M313.71000000000004 526.8l1.4-1.4h5.6l-1.3 1.4z" fill="#8fcaf3"/><path d="M319.41 526.8l1.3-1.4v5.8l-1.3 1.4z" fill="#3b8ccc"/><rect x="313.71000000000004" y="526.8" width="5.7" height="5.8" fill="#5aaceb"/><path d="M321.61 526v6" stroke="#555" stroke-width="0.5"/><path d="M317.61 535.2v2.3" stroke="#aaa" stroke-width="0.5"/><rect x="326.3" y="525.4" width="7.2" height="7.2" fill="none" stroke="#999" stroke-width="0.5"/><rect x="325.6" y="524.6999999999999" width="1.4" height="1.4" fill="#2d90e2"/><rect x="332.80000000000007" y="524.6999999999999" width="1.4" height="1.4" fill="#2d90e2"/><rect x="325.6" y="531.9" width="1.4" height="1.4" fill="#2d90e2"/><path d="M330.50000000000006 533.2l0.4-1.5 2.6-2.6 1.1 1.1-2.6 2.6z" fill="#f3b21a"/><circle cx="333.90000000000003" cy="529.6" r="0.8" fill="#e5484d"/><path d="M330.1 535.2v2.3" stroke="#aaa" stroke-width="0.5"/><path d="M338.69000000000005 532.2l1 1h5.8l1-1z" fill="#bbb"/><path d="M338.69000000000005 526.8l1.4-1.4h5.6l-1.3 1.4z" fill="#8fcaf3"/><path d="M344.39000000000004 526.8l1.3-1.4v5.8l-1.3 1.4z" fill="#3b8ccc"/><rect x="338.69000000000005" y="526.8" width="5.7" height="5.8" fill="#5aaceb"/><path d="M346.59000000000003 526v6" stroke="#555" stroke-width="0.5"/><path d="M342.59000000000003 535.2v2.3" stroke="#aaa" stroke-width="0.5"/><path d="M351.18000000000006 532.2l1 1h5.8l1-1z" fill="#bbb"/><path d="M351.18000000000006 526.8l1.4-1.4h5.6l-1.3 1.4z" fill="#8fcaf3"/><path d="M356.88000000000005 526.8l1.3-1.4v5.8l-1.3 1.4z" fill="#3b8ccc"/><rect x="351.18000000000006" y="526.8" width="5.7" height="5.8" fill="#5aaceb"/><path d="M359.08000000000004 526v6" stroke="#555" stroke-width="0.5"/><path d="M355.08000000000004 535.2v2.3" stroke="#aaa" stroke-width="0.5"/><rect x="363.77" y="525.4" width="7.2" height="7.2" fill="none" stroke="#999" stroke-width="0.5"/><rect x="363.07" y="524.6999999999999" width="1.4" height="1.4" fill="#2d90e2"/><rect x="370.27000000000004" y="524.6999999999999" width="1.4" height="1.4" fill="#2d90e2"/><rect x="363.07" y="531.9" width="1.4" height="1.4" fill="#2d90e2"/><path d="M367.97 533.2l0.4-1.5 2.6-2.6 1.1 1.1-2.6 2.6z" fill="#f3b21a"/><circle cx="371.37" cy="529.6" r="0.8" fill="#e5484d"/><path d="M367.57 535.2v2.3" stroke="#aaa" stroke-width="0.5"/><path d="M376.16 532.2l1 1h5.8l1-1z" fill="#bbb"/><path d="M376.16 526.8l1.4-1.4h5.6l-1.3 1.4z" fill="#8fcaf3"/><path d="M381.86 526.8l1.3-1.4v5.8l-1.3 1.4z" fill="#3b8ccc"/><rect x="376.16" y="526.8" width="5.7" height="5.8" fill="#5aaceb"/><path d="M384.06 526v6" stroke="#555" stroke-width="0.5"/><path d="M380.06 535.2v2.3" stroke="#aaa" stroke-width="0.5"/><path d="M388.65000000000003 532.2l1 1h5.8l1-1z" fill="#bbb"/><path d="M388.65000000000003 526.8l1.4-1.4h5.6l-1.3 1.4z" fill="#8fcaf3"/><path d="M394.35 526.8l1.3-1.4v5.8l-1.3 1.4z" fill="#3b8ccc"/><rect x="388.65000000000003" y="526.8" width="5.7" height="5.8" fill="#5aaceb"/><path d="M396.55 526v6" stroke="#555" stroke-width="0.5"/><path d="M392.55 535.2v2.3" stroke="#aaa" stroke-width="0.5"/><rect x="401.24" y="525.4" width="7.2" height="7.2" fill="none" stroke="#999" stroke-width="0.5"/><rect x="400.54" y="524.6999999999999" width="1.4" height="1.4" fill="#2d90e2"/><rect x="407.74000000000007" y="524.6999999999999" width="1.4" height="1.4" fill="#2d90e2"/><rect x="400.54" y="531.9" width="1.4" height="1.4" fill="#2d90e2"/><path d="M405.44000000000005 533.2l0.4-1.5 2.6-2.6 1.1 1.1-2.6 2.6z" fill="#f3b21a"/><circle cx="408.84000000000003" cy="529.6" r="0.8" fill="#e5484d"/><path d="M405.04 535.2v2.3" stroke="#aaa" stroke-width="0.5"/><path d="M413.63000000000005 532.2l1 1h5.8l1-1z" fill="#bbb"/><path d="M413.63000000000005 526.8l1.4-1.4h5.6l-1.3 1.4z" fill="#8fcaf3"/><path d="M419.33000000000004 526.8l1.3-1.4v5.8l-1.3 1.4z" fill="#3b8ccc"/><rect x="413.63000000000005" y="526.8" width="5.7" height="5.8" fill="#5aaceb"/><path d="M421.53000000000003 526v6" stroke="#555" stroke-width="0.5"/><path d="M417.53000000000003 535.2v2.3" stroke="#aaa" stroke-width="0.5"/><rect x="426.22" y="525.4" width="7.2" height="7.2" fill="none" stroke="#999" stroke-width="0.5"/><rect x="425.52000000000004" y="524.6999999999999" width="1.4" height="1.4" fill="#2d90e2"/><rect x="432.7200000000001" y="524.6999999999999" width="1.4" height="1.4" fill="#2d90e2"/><rect x="425.52000000000004" y="531.9" width="1.4" height="1.4" fill="#2d90e2"/><path d="M430.4200000000001 533.2l0.4-1.5 2.6-2.6 1.1 1.1-2.6 2.6z" fill="#f3b21a"/><circle cx="433.82000000000005" cy="529.6" r="0.8" fill="#e5484d"/><path d="M430.02000000000004 535.2v2.3" stroke="#aaa" stroke-width="0.5"/><path d="M438.61 532.2l1 1h5.8l1-1z" fill="#bbb"/><path d="M438.61 526.8l1.4-1.4h5.6l-1.3 1.4z" fill="#8fcaf3"/><path d="M444.31 526.8l1.3-1.4v5.8l-1.3 1.4z" fill="#3b8ccc"/><rect x="438.61" y="526.8" width="5.7" height="5.8" fill="#5aaceb"/><path d="M446.51 526v6" stroke="#555" stroke-width="0.5"/><path d="M442.51 535.2v2.3" stroke="#aaa" stroke-width="0.5"/><rect x="451.2" y="525.4" width="7.2" height="7.2" fill="none" stroke="#999" stroke-width="0.5"/><rect x="450.5" y="524.6999999999999" width="1.4" height="1.4" fill="#2d90e2"/><rect x="457.70000000000005" y="524.6999999999999" width="1.4" height="1.4" fill="#2d90e2"/><rect x="450.5" y="531.9" width="1.4" height="1.4" fill="#2d90e2"/><path d="M455.40000000000003 533.2l0.4-1.5 2.6-2.6 1.1 1.1-2.6 2.6z" fill="#f3b21a"/><circle cx="458.8" cy="529.6" r="0.8" fill="#e5484d"/><path d="M455.0 535.2v2.3" stroke="#aaa" stroke-width="0.5"/><path d="M463.59000000000003 532.2l1 1h5.8l1-1z" fill="#bbb"/><path d="M463.59000000000003 526.8l1.4-1.4h5.6l-1.3 1.4z" fill="#8fcaf3"/><path d="M469.29 526.8l1.3-1.4v5.8l-1.3 1.4z" fill="#3b8ccc"/><rect x="463.59000000000003" y="526.8" width="5.7" height="5.8" fill="#5aaceb"/><path d="M471.49 526v6" stroke="#555" stroke-width="0.5"/><path d="M467.49 535.2v2.3" stroke="#aaa" stroke-width="0.5"/><rect x="476.18" y="525.4" width="7.2" height="7.2" fill="none" stroke="#999" stroke-width="0.5"/><rect x="475.48" y="524.6999999999999" width="1.4" height="1.4" fill="#2d90e2"/><rect x="482.68000000000006" y="524.6999999999999" width="1.4" height="1.4" fill="#2d90e2"/><rect x="475.48" y="531.9" width="1.4" height="1.4" fill="#2d90e2"/><path d="M480.38000000000005 533.2l0.4-1.5 2.6-2.6 1.1 1.1-2.6 2.6z" fill="#f3b21a"/><circle cx="483.78000000000003" cy="529.6" r="0.8" fill="#e5484d"/><path d="M479.98 535.2v2.3" stroke="#aaa" stroke-width="0.5"/><path d="M488.57000000000005 532.2l1 1h5.8l1-1z" fill="#bbb"/><path d="M488.57000000000005 526.8l1.4-1.4h5.6l-1.3 1.4z" fill="#8fcaf3"/><path d="M494.27000000000004 526.8l1.3-1.4v5.8l-1.3 1.4z" fill="#3b8ccc"/><rect x="488.57000000000005" y="526.8" width="5.7" height="5.8" fill="#5aaceb"/><path d="M496.47 526v6" stroke="#555" stroke-width="0.5"/><path d="M492.47 535.2v2.3" stroke="#aaa" stroke-width="0.5"/><path d="M501.06000000000006 532.2l1 1h5.8l1-1z" fill="#bbb"/><path d="M501.06000000000006 526.8l1.4-1.4h5.6l-1.3 1.4z" fill="#8fcaf3"/><path d="M506.76000000000005 526.8l1.3-1.4v5.8l-1.3 1.4z" fill="#3b8ccc"/><rect x="501.06000000000006" y="526.8" width="5.7" height="5.8" fill="#5aaceb"/><path d="M508.96000000000004 526v6" stroke="#555" stroke-width="0.5"/><path d="M504.96000000000004 535.2v2.3" stroke="#aaa" stroke-width="0.5"/><rect x="513.65" y="525.4" width="7.2" height="7.2" fill="none" stroke="#999" stroke-width="0.5"/><rect x="512.9499999999999" y="524.6999999999999" width="1.4" height="1.4" fill="#2d90e2"/><rect x="520.15" y="524.6999999999999" width="1.4" height="1.4" fill="#2d90e2"/><rect x="512.9499999999999" y="531.9" width="1.4" height="1.4" fill="#2d90e2"/><path d="M517.85 533.2l0.4-1.5 2.6-2.6 1.1 1.1-2.6 2.6z" fill="#f3b21a"/><circle cx="521.25" cy="529.6" r="0.8" fill="#e5484d"/><path d="M517.45 535.2v2.3" stroke="#aaa" stroke-width="0.5"/><path d="M526.0399999999998 532.2l1 1h5.8l1-1z" fill="#bbb"/><path d="M526.0399999999998 526.8l1.4-1.4h5.6l-1.3 1.4z" fill="#8fcaf3"/><path d="M531.7399999999999 526.8l1.3-1.4v5.8l-1.3 1.4z" fill="#3b8ccc"/><rect x="526.0399999999998" y="526.8" width="5.7" height="5.8" fill="#5aaceb"/><path d="M533.9399999999999 526v6" stroke="#555" stroke-width="0.5"/><path d="M529.9399999999999 535.2v2.3" stroke="#aaa" stroke-width="0.5"/><rect x="538.6299999999999" y="525.4" width="7.2" height="7.2" fill="none" stroke="#999" stroke-width="0.5"/><rect x="537.9299999999998" y="524.6999999999999" width="1.4" height="1.4" fill="#2d90e2"/><rect x="545.1299999999999" y="524.6999999999999" width="1.4" height="1.4" fill="#2d90e2"/><rect x="537.9299999999998" y="531.9" width="1.4" height="1.4" fill="#2d90e2"/><path d="M542.8299999999999 533.2l0.4-1.5 2.6-2.6 1.1 1.1-2.6 2.6z" fill="#f3b21a"/><circle cx="546.2299999999999" cy="529.6" r="0.8" fill="#e5484d"/><path d="M542.43 535.2v2.3" stroke="#aaa" stroke-width="0.5"/><path d="M551.0199999999999 532.2l1 1h5.8l1-1z" fill="#bbb"/><path d="M551.0199999999999 526.8l1.4-1.4h5.6l-1.3 1.4z" fill="#8fcaf3"/><path d="M556.7199999999999 526.8l1.3-1.4v5.8l-1.3 1.4z" fill="#3b8ccc"/><rect x="551.0199999999999" y="526.8" width="5.7" height="5.8" fill="#5aaceb"/><path d="M558.92 526v6" stroke="#555" stroke-width="0.5"/><path d="M554.92 535.2v2.3" stroke="#aaa" stroke-width="0.5"/><rect x="563.6099999999999" y="525.4" width="7.2" height="7.2" fill="none" stroke="#999" stroke-width="0.5"/><rect x="562.9099999999999" y="524.6999999999999" width="1.4" height="1.4" fill="#2d90e2"/><rect x="570.1099999999999" y="524.6999999999999" width="1.4" height="1.4" fill="#2d90e2"/><rect x="562.9099999999999" y="531.9" width="1.4" height="1.4" fill="#2d90e2"/><path d="M567.81 533.2l0.4-1.5 2.6-2.6 1.1 1.1-2.6 2.6z" fill="#f3b21a"/><circle cx="571.2099999999999" cy="529.6" r="0.8" fill="#e5484d"/><path d="M567.41 535.2v2.3" stroke="#aaa" stroke-width="0.5"/><path d="M575.9999999999999 532.2l1 1h5.8l1-1z" fill="#bbb"/><path d="M575.9999999999999 526.8l1.4-1.4h5.6l-1.3 1.4z" fill="#8fcaf3"/><path d="M581.6999999999999 526.8l1.3-1.4v5.8l-1.3 1.4z" fill="#3b8ccc"/><rect x="575.9999999999999" y="526.8" width="5.7" height="5.8" fill="#5aaceb"/><path d="M583.9 526v6" stroke="#555" stroke-width="0.5"/><path d="M579.9 535.2v2.3" stroke="#aaa" stroke-width="0.5"/><rect x="588.5899999999999" y="525.4" width="7.2" height="7.2" fill="none" stroke="#999" stroke-width="0.5"/><rect x="587.8899999999999" y="524.6999999999999" width="1.4" height="1.4" fill="#2d90e2"/><rect x="595.0899999999999" y="524.6999999999999" width="1.4" height="1.4" fill="#2d90e2"/><rect x="587.8899999999999" y="531.9" width="1.4" height="1.4" fill="#2d90e2"/><path d="M592.79 533.2l0.4-1.5 2.6-2.6 1.1 1.1-2.6 2.6z" fill="#f3b21a"/><circle cx="596.1899999999999" cy="529.6" r="0.8" fill="#e5484d"/><path d="M592.39 535.2v2.3" stroke="#aaa" stroke-width="0.5"/><path d="M600.9799999999999 532.2l1 1h5.8l1-1z" fill="#bbb"/><path d="M600.9799999999999 526.8l1.4-1.4h5.6l-1.3 1.4z" fill="#8fcaf3"/><path d="M606.68 526.8l1.3-1.4v5.8l-1.3 1.4z" fill="#3b8ccc"/><rect x="600.9799999999999" y="526.8" width="5.7" height="5.8" fill="#5aaceb"/><path d="M608.88 526v6" stroke="#555" stroke-width="0.5"/><path d="M604.88 535.2v2.3" stroke="#aaa" stroke-width="0.5"/><path d="M613.67 528l2.6-2.4h2.8l2.8 3v4.6H613.67z" fill="#e6e6e6" stroke="#777" stroke-width="0.5"/><path d="M616.37 527.4l2.2-1.8 3.2 3.1-1.6 1.8z" fill="#5aaceb"/><path d="M617.37 535.2v2.3" stroke="#aaa" stroke-width="0.5"/><rect x="626.06" y="525.4" width="7.2" height="7.2" fill="none" stroke="#999" stroke-width="0.5"/><rect x="625.3599999999999" y="524.6999999999999" width="1.4" height="1.4" fill="#2d90e2"/><rect x="632.56" y="524.6999999999999" width="1.4" height="1.4" fill="#2d90e2"/><rect x="625.3599999999999" y="531.9" width="1.4" height="1.4" fill="#2d90e2"/><path d="M630.26 533.2l0.4-1.5 2.6-2.6 1.1 1.1-2.6 2.6z" fill="#f3b21a"/><circle cx="633.66" cy="529.6" r="0.8" fill="#e5484d"/><path d="M629.86 535.2v2.3" stroke="#aaa" stroke-width="0.5"/><path d="M638.4499999999998 532.2l1 1h5.8l1-1z" fill="#bbb"/><path d="M638.4499999999998 526.8l1.4-1.4h5.6l-1.3 1.4z" fill="#8fcaf3"/><path d="M644.1499999999999 526.8l1.3-1.4v5.8l-1.3 1.4z" fill="#3b8ccc"/><rect x="638.4499999999998" y="526.8" width="5.7" height="5.8" fill="#5aaceb"/><path d="M646.3499999999999 526v6" stroke="#555" stroke-width="0.5"/><path d="M642.3499999999999 535.2v2.3" stroke="#aaa" stroke-width="0.5"/><path d="M651.1399999999999 528l2.6-2.4h2.8l2.8 3v4.6H651.1399999999999z" fill="#e6e6e6" stroke="#777" stroke-width="0.5"/><path d="M653.8399999999999 527.4l2.2-1.8 3.2 3.1-1.6 1.8z" fill="#5aaceb"/><path d="M654.8399999999999 535.2v2.3" stroke="#aaa" stroke-width="0.5"/><rect x="663.5299999999999" y="525.4" width="7.2" height="7.2" fill="none" stroke="#999" stroke-width="0.5"/><rect x="662.8299999999998" y="524.6999999999999" width="1.4" height="1.4" fill="#2d90e2"/><rect x="670.0299999999999" y="524.6999999999999" width="1.4" height="1.4" fill="#2d90e2"/><rect x="662.8299999999998" y="531.9" width="1.4" height="1.4" fill="#2d90e2"/><path d="M667.7299999999999 533.2l0.4-1.5 2.6-2.6 1.1 1.1-2.6 2.6z" fill="#f3b21a"/><circle cx="671.1299999999999" cy="529.6" r="0.8" fill="#e5484d"/><path d="M667.3299999999999 535.2v2.3" stroke="#aaa" stroke-width="0.5"/><rect x="675.9199999999998" y="525.3" width="7.6" height="7.6" rx="0.8" fill="#4fa6e8"/><path d="M675.9199999999998 532.9v-2.8l2.4-2.2 2.6 2.6 1.4-1 1.2 1.2v2.2z" fill="#2d7fc2"/><circle cx="681.4199999999998" cy="527.5" r="0.9" fill="#f6f7b0"/><path d="M679.8199999999999 535.2v2.3" stroke="#aaa" stroke-width="0.5"/><path d="M688.4099999999999 532.2l1 1h5.8l1-1z" fill="#bbb"/><path d="M688.4099999999999 526.8l1.4-1.4h5.6l-1.3 1.4z" fill="#8fcaf3"/><path d="M694.1099999999999 526.8l1.3-1.4v5.8l-1.3 1.4z" fill="#3b8ccc"/><rect x="688.4099999999999" y="526.8" width="5.7" height="5.8" fill="#5aaceb"/><path d="M696.31 526v6" stroke="#555" stroke-width="0.5"/><path d="M692.31 535.2v2.3" stroke="#aaa" stroke-width="0.5"/><path d="M700.8999999999999 532.2l1 1h5.8l1-1z" fill="#bbb"/><path d="M700.8999999999999 526.8l1.4-1.4h5.6l-1.3 1.4z" fill="#8fcaf3"/><path d="M706.5999999999999 526.8l1.3-1.4v5.8l-1.3 1.4z" fill="#3b8ccc"/><rect x="700.8999999999999" y="526.8" width="5.7" height="5.8" fill="#5aaceb"/><path d="M708.8 526v6" stroke="#555" stroke-width="0.5"/><path d="M704.8 535.2v2.3" stroke="#aaa" stroke-width="0.5"/><path d="M80.3 537.6H705" stroke="#c6c6c6" stroke-width="0.9"/><path d="M708.4 522h6.5l-2.3 2.6v1.2h-1.9v-1.2z" fill="#555"/><rect x="710.9" y="525" width="0.9" height="13.2" fill="#555"/><circle cx="989" cy="529.4" r="2.8" fill="none" stroke="#9a9a9a" stroke-width="1.8" stroke-dasharray="1.1 0.65"/><circle cx="989" cy="529.4" r="2.2" fill="none" stroke="#9a9a9a" stroke-width="1.2"/></svg>
<div style="position:absolute;left:0px;top:542px;width:1000px;height:21px;background:#202020;"></div>
<div style="position:absolute;left:263.4px;top:542px;width:83px;height:21px;background:#3a3a3a;"></div>
<div style="position:absolute;left:156px;top:561.4px;width:79px;height:1.6px;background:#8fbfe6;"></div>
<div style="position:absolute;left:263.4px;top:561.4px;width:83px;height:1.6px;background:#8fbfe6;"></div>
<svg style="position:absolute;left:0;top:542px" width="1000" height="21" viewBox="0 542 1000 21"><path d="M8.2 548.8l4-0.6v3.9h-4zM12.9 548.1l4.5-0.7v4.7h-4.5zM8.2 552.8h4v3.9l-4-0.6zM12.9 552.8h4.5v4.7l-4.5-0.7z" fill="#f4f4f4"/><circle cx="38.7" cy="550.8" r="2.7" fill="none" stroke="#ddd" stroke-width="0.8"/><path d="M36.8 552.7l-3.2 3.6" stroke="#ddd" stroke-width="0.9"/><path d="M57.7 551.5l6.4-4.8 6.4 4.8v6.3H57.7z" fill="#1a86d8"/><path d="M58.6 551.4h11l-5.5 2.4z" fill="#fff"/><path d="M57.7 557.8l6.4-4.5 6.4 4.5z" fill="#2ca7ee"/><path d="M57.7 551.5v6.3l6.4-4.5z" fill="#1576c4"/><path d="M84 548.6h4l1 1h6v7.6H84z" fill="#e9b53c"/><rect x="84" y="550.6" width="11" height="6.6" fill="#f6cf5c"/><rect x="88" y="553.4" width="3.5" height="3" fill="#2b7fd0"/><rect x="86.6" y="553.4" width="6.2" height="1.4" fill="#2b7fd0"/><rect x="109.4" y="548.2" width="10.6" height="9.4" rx="0.8" fill="#7fb1d6"/><circle cx="114.3" cy="553" r="3.3" fill="#f07a22"/><path d="M113.2 551.2l2.8 1.8-2.8 1.8z" fill="#fff"/><rect x="134.2" y="546" width="12.8" height="12.8" fill="#2b8fe8"/><circle cx="140.6" cy="552.4" r="4.2" fill="#1d5f9e"/><circle cx="140.6" cy="552.4" r="3.2" fill="#3da0e6"/><path d="M138.8 550.4h3.6l-2.2 4.4" fill="none" stroke="#fff" stroke-width="1"/><defs><radialGradient id="ffp" cx="0.4" cy="0.4" r="0.7"><stop offset="0" stop-color="#b15cf0"/><stop offset="1" stop-color="#5a2ad0"/></radialGradient><linearGradient id="ffo" x1="0" y1="0" x2="1" y2="1"><stop offset="0" stop-color="#ffb42a"/><stop offset="0.6" stop-color="#ff5a2a"/><stop offset="1" stop-color="#e3205a"/></linearGradient></defs><circle cx="165.4" cy="552.2" r="5.7" fill="url(#ffp)"/><path d="M170.2 547.6c1.6 1.4 1.8 3.4 1.6 4.8-0.4 3.6-3.4 6.2-6.8 6-3.6-0.2-6.2-3.2-6-6.6 0.1-1.6 0.8-3 1.6-4 0 1.2 0.4 2 1.2 2.6-0.2 2.6 1.6 4.6 3.6 4.6 2.4 0 4-1.6 4-3.6 0-2.2-1.6-3.2-3.4-3.4 1.4-0.6 2.8-0.6 4.2-0.4z" fill="url(#ffo)"/><path d="M168 546.2c1.6 0.2 2.6 0.8 3 1.6-1.2-0.4-2.2-0.2-2.8 0.2z" fill="#ffd43a"/><rect x="244" y="546" width="11.6" height="11.4" fill="#001d34" stroke="#31a8ff" stroke-width="0.8"/><rect x="268" y="545.5" width="13.5" height="13.5" fill="#f7d6b4"/><path d="M271.5 547.6h6v2h-3.8v2h3.2v2h-3.2v4.2h-2.2z" fill="#dd7a2a"/><path d="M895.4 553.8l3.2-3.2 3.2 3.2" fill="none" stroke="#ddd" stroke-width="0.9"/><path d="M906.6 550.4h1.8l2.6-2.4v9l-2.6-2.4h-1.8z" fill="none" stroke="#ddd" stroke-width="0.7"/><path d="M912.4 550.3c0.9 1.4 0.9 3 0 4.4M914 549.3c1.4 2 1.4 4.5 0 6.4" fill="none" stroke="#888" stroke-width="0.6"/><rect x="979.5" y="548.2" width="10.4" height="8" fill="#eee"/><path d="M981 550.3h7.2M981 552.1h7.2M981 553.9h5" stroke="#888" stroke-width="0.6"/><circle cx="988.6" cy="557.2" r="3.4" fill="#202020" stroke="#ddd" stroke-width="0.7"/><rect x="997" y="542" width="0.8" height="21" fill="#555"/></svg>
<div style="position:absolute;left:245.6px;top:549.2px;font-size:5.8px;line-height:1;color:#31a8ff;font-weight:bold;white-space:nowrap;">Ps</div>
<div style="position:absolute;left:173.6px;top:548.74px;font-size:6.686px;line-height:1;color:#eeeeee;font-weight:normal;white-space:nowrap;transform:scaleX(0.9086);transform-origin:0 0;-webkit-text-stroke:0.15px #eee;">Apple WON... but a...</div>
<div style="position:absolute;left:283.3px;top:548.74px;font-size:6.686px;line-height:1;color:#eeeeee;font-weight:normal;white-space:nowrap;transform:scaleX(0.8938);transform-origin:0 0;-webkit-text-stroke:0.15px #eee;">Autodesk Fusion 36...</div>
<div style="position:absolute;left:920.2px;top:549.24px;font-size:6.686px;line-height:1;color:#eeeeee;font-weight:normal;white-space:nowrap;transform:scaleX(0.8489);transform-origin:0 0;">ENG</div>
<div style="position:absolute;left:943.2px;top:544.24px;font-size:6.686px;line-height:1;color:#eeeeee;font-weight:normal;white-space:nowrap;transform:scaleX(0.8887);transform-origin:0 0;">7:12 AM</div>
<div style="position:absolute;left:939.2px;top:554.24px;font-size:6.686px;line-height:1;color:#eeeeee;font-weight:normal;white-space:nowrap;transform:scaleX(0.8965);transform-origin:0 0;">25/09/2021</div>
<div style="position:absolute;left:986.8px;top:555px;font-size:4.6px;line-height:1;color:#eee;font-weight:bold;white-space:nowrap;">2</div>
<svg style="position:absolute;left:0;top:0" width="1000" height="563" viewBox="0 0 1000 563"><defs>
<radialGradient id="gFloor" cx="440" cy="290" r="180" gradientUnits="userSpaceOnUse"><stop offset="0" stop-color="#625f55"/><stop offset="0.7" stop-color="#5a574f"/><stop offset="1" stop-color="#524f48"/></radialGradient>
<linearGradient id="gInner" x1="0" y1="0" x2="0" y2="1"><stop offset="0" stop-color="#5a5a54"/><stop offset="1" stop-color="#42423e"/></linearGradient>
<linearGradient id="gDark" x1="0" y1="0" x2="1" y2="1"><stop offset="0" stop-color="#4a4a45"/><stop offset="1" stop-color="#3a3a37"/></linearGradient>
<linearGradient id="gBack" x1="0" y1="0" x2="1" y2="0"><stop offset="0" stop-color="#3f403c"/><stop offset="1" stop-color="#5a5b56"/></linearGradient>
<linearGradient id="gRight" x1="460" y1="290" x2="476.8" y2="274.4" gradientUnits="userSpaceOnUse"><stop offset="0" stop-color="#363633"/><stop offset="1" stop-color="#55554f"/></linearGradient>
</defs><polygon points="379.3,155.6 552.8,343.2 552.8,377.5 573.5,399.5 573.5,375.1 580,372.8 596.7,390.3 596.6,429.9 492.8,467.2 442.4,413.6 391.3,431.7 255.3,284.4 254.8,257.5 275.8,206.2 300.7,197.6 305.5,201.4 305.6,206.8 349.7,191.2 349.7,166.0" fill="url(#gFloor)" stroke="#1c1c1a" stroke-width="0.7" stroke-linejoin="miter" stroke-miterlimit="3" /><polygon points="286.3,208.3 305.5,201.4 306,212.6 352.5,196.2 353.2,169.9 376.6,162.8 375.9,196.9 301.2,224.3" fill="url(#gBack)" stroke="#1c1c1a" stroke-width="0.7" stroke-linejoin="miter" stroke-miterlimit="3" /><polygon points="349.7,166 353.2,169.9 352.5,196.2 349.7,191.2" fill="#5b5b55" stroke="#1c1c1a" stroke-width="0.7" stroke-linejoin="miter" stroke-miterlimit="3" /><polygon points="376.6,162.8 547.2,344.8 546.4,380 375.9,196.9" fill="url(#gRight)" stroke="#1c1c1a" stroke-width="0.7" stroke-linejoin="miter" stroke-miterlimit="3" /><polygon points="547.2,344.8 552.8,343.2 552.8,377.5 546.4,380" fill="#5c5c57" stroke="#1c1c1a" stroke-width="0.7" stroke-linejoin="miter" stroke-miterlimit="3" /><polygon points="349.7,166 379.3,155.6 552.8,343.2 547.2,344.8 376.6,162.8 353.2,169.9" fill="#6b675d" stroke="#1c1c1a" stroke-width="0.7" stroke-linejoin="miter" stroke-miterlimit="3" /><polygon points="349.7,191.2 305.6,206.8 306,212.6 352.5,196.2" fill="#6b675d" stroke="#1c1c1a" stroke-width="0.7" stroke-linejoin="miter" stroke-miterlimit="3" /><polygon points="254.8,257.5 328.5,338.2 329.5,345.5 384.2,404.1 391.3,406.1 391.3,431.7 255.3,284.4" fill="#4c4b46" stroke="#1c1c1a" stroke-width="0.7" stroke-linejoin="miter" stroke-miterlimit="3" /><polygon points="281.1,213.3 281.1,235.5 268.7,263 262.4,257.1" fill="#474743" stroke="#1c1c1a" stroke-width="0.7" stroke-linejoin="miter" stroke-miterlimit="3" /><polygon points="281.1,213.3 363.9,302.3 348.6,307.1 281.1,235.5" fill="url(#gDark)" stroke="#1c1c1a" stroke-width="0.7" stroke-linejoin="miter" stroke-miterlimit="3" /><polygon points="281.1,235.5 348.6,307.1 319.2,318.3 268.7,263" fill="#5a574f" stroke="#1c1c1a" stroke-width="0.4" stroke-linejoin="miter" stroke-miterlimit="3" /><path d="M275.8,206.2 L300.7,197.6 L305.5,201.4 L286.3,208.3 L373.5,303.9 L324.4,322.8 L332.6,335.3 L328.5,338.2 L254.8,257.5 Z M281.1,213.3 L363.9,302.3 L319.2,318.3 L262.4,257.1 Z" fill="#6b675d" fill-rule="evenodd" stroke="#1c1c1a" stroke-width="0.7" stroke-linejoin="miter"/><polygon points="324.4,322.8 373.5,303.9 373.7,326 334,339.5 332.6,335.3" fill="#565550" stroke="#1c1c1a" stroke-width="0.7" stroke-linejoin="miter" stroke-miterlimit="3" /><polygon points="328.5,338.2 332.6,335.3 333.5,340.6 329.5,345.5" fill="#66635a" stroke="#1c1c1a" stroke-width="0.7" stroke-linejoin="miter" stroke-miterlimit="3" /><ellipse cx="419.2" cy="386.4" rx="10" ry="5.4" fill="#5c5950" stroke="#1c1c1a" stroke-width="0.65"/><ellipse cx="418.6" cy="387.4" rx="4.4" ry="3.1" fill="#66655f" stroke="#1c1c1a" stroke-width="0.55"/><path d="M414.4 386.6a4.4 3 0 0 1 8.6 0" fill="none" stroke="#3c3b37" stroke-width="0.7"/><polygon points="329.5,345.5 333.5,340.6 385.9,397.5 384.2,404.1" fill="#6b675d" stroke="#1c1c1a" stroke-width="0.7" stroke-linejoin="miter" stroke-miterlimit="3" /><polygon points="385.9,397.5 390.8,396.8 393.7,399.6 444.6,381.1 458.8,396.5 453.5,398 441.9,387.3 391.3,406.1 384.2,404.1" fill="#6b675d" stroke="#1c1c1a" stroke-width="0.7" stroke-linejoin="miter" stroke-miterlimit="3" /><polygon points="391.3,406.1 441.9,387.3 442.4,413.6 391.3,431.7" fill="#5d5c57" stroke="#1c1c1a" stroke-width="0.7" stroke-linejoin="miter" stroke-miterlimit="3" /><polygon points="441.9,387.3 452.8,397.6 452.8,420 442.4,413.6" fill="#494944" stroke="#1c1c1a" stroke-width="0.7" stroke-linejoin="miter" stroke-miterlimit="3" /><polygon points="452.8,397.6 459.2,396 459.2,418.4 452.8,420" fill="#5e5d58" stroke="#1c1c1a" stroke-width="0.7" stroke-linejoin="miter" stroke-miterlimit="3" /><polygon points="442.4,413.6 452.8,420 489.6,458.4 492.8,467.2" fill="#4e4d48" stroke="#1c1c1a" stroke-width="0.5" stroke-linejoin="miter" stroke-miterlimit="3" /><polygon points="575.1,375.9 586.3,388.7 575.1,393.5" fill="#474742" stroke="#1c1c1a" stroke-width="0.7" stroke-linejoin="miter" stroke-miterlimit="3" /><polygon points="573.5,375.1 580,372.8 596.7,390.3 586.3,388.7 575.1,375.9" fill="#6b675d" stroke="#1c1c1a" stroke-width="0.7" stroke-linejoin="miter" stroke-miterlimit="3" /><polygon points="489.6,422.5 492.8,428.2 492.8,467.2 489.6,458.4" fill="#51504b" stroke="#1c1c1a" stroke-width="0.7" stroke-linejoin="miter" stroke-miterlimit="3" /><polygon points="489.6,422.5 586.3,388.7 596.6,390.6 492.8,428.2" fill="#6b675d" stroke="#1c1c1a" stroke-width="0.7" stroke-linejoin="miter" stroke-miterlimit="3" /><polygon points="492.8,428.2 596.6,390.6 596.6,429.9 492.8,467.2" fill="#5d5c57" stroke="#1c1c1a" stroke-width="0.7" stroke-linejoin="miter" stroke-miterlimit="3" /><defs><linearGradient id="gCyl" x1="338.6" y1="0" x2="358.6" y2="0" gradientUnits="userSpaceOnUse"><stop offset="0" stop-color="#4a4a46"/><stop offset="0.55" stop-color="#5a5954"/><stop offset="1" stop-color="#4e4d49"/></linearGradient></defs><path d="M338.6 328.5v17.8a10 5.2 0 0 0 20 0v-17.8z" fill="url(#gCyl)" stroke="#1c1c1a" stroke-width="0.7"/><ellipse cx="348.6" cy="328.5" rx="10" ry="6.1" fill="#69665c" stroke="#1c1c1a" stroke-width="0.7"/><ellipse cx="348.6" cy="329" rx="4.9" ry="3.4" fill="#55534d" stroke="#1c1c1a" stroke-width="0.6"/><path d="M344 330a4.9 3.4 0 0 0 9.2 0" fill="none" stroke="#3a3a36" stroke-width="0.8"/></svg>
<svg style="position:absolute;left:930px;top:75px" width="70" height="60" viewBox="930 75 70 60">
<defs><radialGradient id="cs" cx="965" cy="122" r="20" gradientUnits="userSpaceOnUse"><stop offset="0" stop-color="#d8d8d8"/><stop offset="1" stop-color="#fff" stop-opacity="0"/></radialGradient>
<linearGradient id="cf" x1="0" y1="0" x2="0" y2="1"><stop offset="0" stop-color="#f2f2f2"/><stop offset="1" stop-color="#e6e6e6"/></linearGradient></defs>
<ellipse cx="965" cy="121" rx="22" ry="9" fill="url(#cs)"/>
<polygon points="949.3,92 969.3,85.3 985.3,97.3 962.2,104" fill="#efefef"/>
<polygon points="962.2,104 985.3,97.3 984.4,115 962.2,126.1" fill="url(#cf)"/>
<polygon points="949.3,92 962.2,104 962.2,126.1 950.4,108.6" fill="#e9e9e9"/>
<path d="M949.3 92L969.3 85.3L985.3 97.3L962.2 104z M985.3 97.3L984.4 115 M949.3 92L950.4 108.6" fill="none" stroke="#b5b5b5" stroke-width="0.6" stroke-dasharray="1.6 1"/>
<text x="0" y="0" transform="translate(966.5,98.5) rotate(-20) skewX(-20)" font-family="Liberation Sans" font-size="4.2" fill="#8c8c8c" text-anchor="middle">TOP</text>
<text x="0" y="0" transform="translate(974.2,114) rotate(-22) skewX(-18)" font-family="Liberation Sans" font-size="4.4" fill="#8a8a8a" text-anchor="middle" font-style="italic">FRONT</text>
<text x="0" y="0" transform="translate(956.3,110) rotate(50) skewY(10)" font-family="Liberation Sans" font-size="3.4" fill="#999" text-anchor="middle">LEFT</text>
<path d="M962.2 126.1L986.1 115.5" stroke="#e05a5a" stroke-width="0.9"/>
<path d="M962.2 126.1L950.6 109.3" stroke="#6fd07a" stroke-width="0.8"/>
<path d="M961.6 126.1V102.6" stroke="#4b4bf0" stroke-width="1"/>
<text x="959" y="101.4" font-family="Liberation Sans" font-size="5.6" fill="#5a5af5">Z</text>
<text x="987" y="116.6" font-family="Liberation Sans" font-size="5.4" fill="#f08a8a">X</text>
<text x="946.6" y="109.3" font-family="Liberation Sans" font-size="5" fill="#90e090">Y</text>
</svg>
</body></html>
